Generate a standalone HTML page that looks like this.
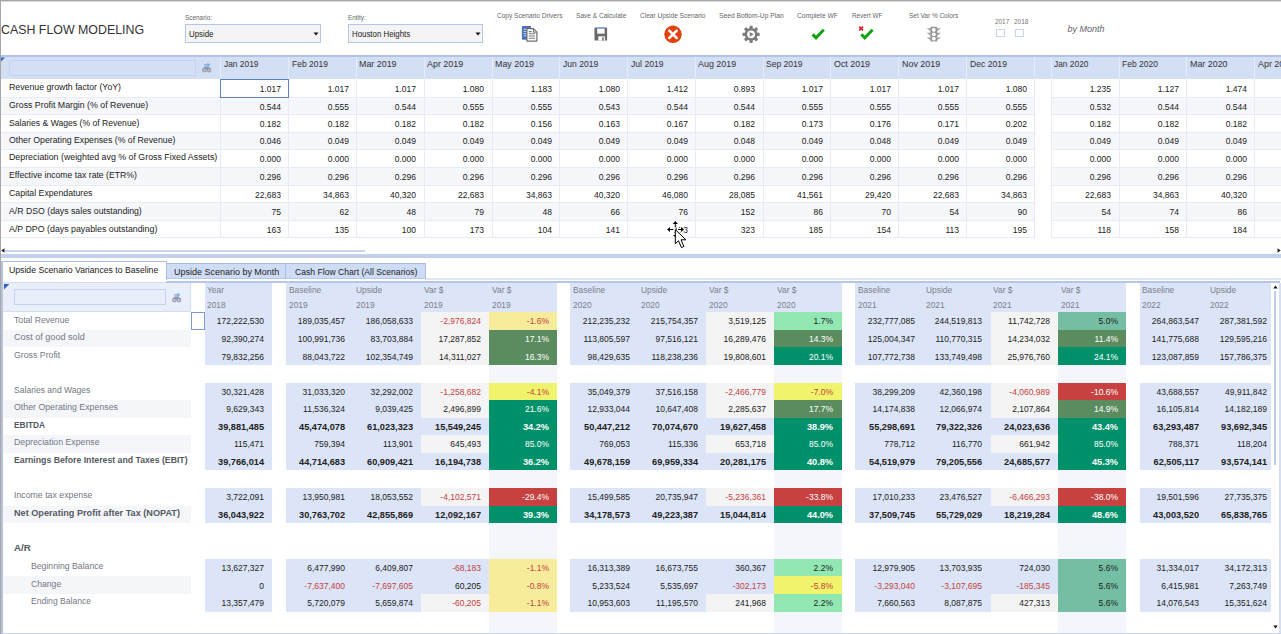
<!DOCTYPE html>
<html lang="en"><head><meta charset="utf-8"><title>Cash Flow Modeling</title>
<style>
html,body{margin:0;padding:0;}
body{width:1281px;height:634px;overflow:hidden;background:#fff;position:relative;font-family:"Liberation Sans",sans-serif;}
body>div,.a{position:absolute;}
.a{z-index:5;}
.t{white-space:nowrap;}
.tri{background:linear-gradient(135deg,#2d5fc4 50%,transparent 50%);}
</style></head><body>
<div style="left:0px;top:0px;width:1281px;height:1px;background:#a9a6a5;"></div>
<div style="left:0px;top:1px;width:1281px;height:1px;background:#d8d6d6;"></div>
<div style="left:0px;top:0px;width:1px;height:634px;background:#a9a6a5;"></div>
<div class="t" style="top:23.97px;font-size:12.5px;line-height:12px;color:#333;left:0.5px;transform:scaleX(0.990);transform-origin:0 50%;">CASH FLOW MODELING</div>
<div class="t" style="top:11.64px;font-size:7.4px;line-height:12px;color:#666;left:185px;transform:scaleX(0.865);transform-origin:0 50%;">Scenario:</div>
<div style="left:185px;top:24px;width:136px;height:19px;background:#f4f4f4;border:1px solid #b4c6ea;box-sizing:border-box;"></div>
<div class="t" style="top:28.32px;font-size:8.6px;line-height:12px;color:#222;left:188.8px;transform:scaleX(0.915);transform-origin:0 50%;">Upside</div>
<svg class="a" style="left:313px;top:32px" width="6" height="4" viewBox="0 0 6 4"><path d="M0.5 0.5h5L3 3.6z" fill="#111"/></svg>
<div class="t" style="top:11.64px;font-size:7.4px;line-height:12px;color:#666;left:348px;transform:scaleX(0.865);transform-origin:0 50%;">Entity:</div>
<div style="left:348px;top:24px;width:135px;height:19px;background:#f4f4f4;border:1px solid #b4c6ea;box-sizing:border-box;"></div>
<div class="t" style="top:28.32px;font-size:8.6px;line-height:12px;color:#222;left:351.8px;transform:scaleX(0.915);transform-origin:0 50%;">Houston Heights</div>
<svg class="a" style="left:475px;top:32px" width="6" height="4" viewBox="0 0 6 4"><path d="M0.5 0.5h5L3 3.6z" fill="#111"/></svg>
<div class="t" style="top:10.04px;font-size:7.4px;line-height:12px;color:#666;left:496.8px;transform:scaleX(0.885);transform-origin:0 50%;">Copy Scenario Drivers</div>
<div class="t" style="top:10.04px;font-size:7.4px;line-height:12px;color:#666;left:576px;transform:scaleX(0.888);transform-origin:0 50%;">Save &amp; Calculate</div>
<div class="t" style="top:10.04px;font-size:7.4px;line-height:12px;color:#666;left:639.5px;transform:scaleX(0.885);transform-origin:0 50%;">Clear Upside Scenario</div>
<div class="t" style="top:10.04px;font-size:7.4px;line-height:12px;color:#666;left:718.5px;transform:scaleX(0.904);transform-origin:0 50%;">Seed Bottom-Up Plan</div>
<div class="t" style="top:10.04px;font-size:7.4px;line-height:12px;color:#666;left:797px;transform:scaleX(0.906);transform-origin:0 50%;">Complete WF</div>
<div class="t" style="top:10.04px;font-size:7.4px;line-height:12px;color:#666;left:851.5px;transform:scaleX(0.860);transform-origin:0 50%;">Revert WF</div>
<div class="t" style="top:10.04px;font-size:7.4px;line-height:12px;color:#666;left:908.8px;transform:scaleX(0.875);transform-origin:0 50%;">Set Var % Colors</div>
<div class="t" style="top:16.01px;font-size:7.2px;line-height:12px;color:#777;left:995.3px;transform:scaleX(0.887);transform-origin:0 50%;">2017</div>
<div class="t" style="top:16.01px;font-size:7.2px;line-height:12px;color:#777;left:1014.2px;transform:scaleX(0.899);transform-origin:0 50%;">2018</div>
<div style="left:996px;top:29px;width:9px;height:8px;background:#fff;border:1px solid #c8d4f0;box-sizing:border-box;"></div>
<div style="left:1014.5px;top:29px;width:9.5px;height:8px;background:#fff;border:1px solid #c8d4f0;box-sizing:border-box;"></div>
<div class="t" style="top:22.68px;font-size:9px;line-height:12px;color:#666;left:1067.5px;font-style:italic;">by Month</div>
<svg class="a" style="left:521px;top:25px" width="18" height="18" viewBox="521 25 18 18">
<rect x="521.9" y="26.1" width="9.2" height="13.6" rx="1" fill="#4a70b8"/>
<path d="M523.5 29.2h4M523.5 31.4h4M523.5 33.6h4M523.5 35.8h4" stroke="#c9d7f0" stroke-width="1"/>
<path d="M526.9 28.7h6.6l3.4 3.4v9h-10z" fill="#fff" stroke="#6f6f6f" stroke-width="1.2" stroke-linejoin="round"/>
<path d="M533.4 28.8v3.4h3.4" fill="none" stroke="#6f6f6f" stroke-width="1"/>
<path d="M528.7 31.6h3M528.7 33.8h6.4M528.7 36h6.4M528.7 38.2h6.4" stroke="#7a7a7a" stroke-width="1.1"/>
</svg>
<svg class="a" style="left:593px;top:26px" width="16" height="16" viewBox="593 26 16 16">
<rect x="594.5" y="27.5" width="12.6" height="13" rx="0.6" fill="#6a6a6a"/>
<rect x="597.2" y="27.5" width="7.4" height="6.2" fill="#fff"/>
<rect x="597.2" y="27.4" width="7.4" height="1.2" fill="#4a7ccc"/>
<rect x="598.3" y="36.3" width="6.6" height="4.3" fill="#fff"/>
<rect x="602.2" y="37.2" width="1.5" height="3.4" fill="#6a6a6a"/>
</svg>
<svg class="a" style="left:663px;top:24px" width="20" height="20" viewBox="663 24 20 20">
<circle cx="673" cy="34.3" r="8.7" fill="#e2410c"/>
<path d="M669.3 30.6l7.4 7.4M676.7 30.6l-7.4 7.4" stroke="#fff" stroke-width="2.5" stroke-linecap="round"/>
</svg>
<svg class="a" style="left:741px;top:24px" width="20" height="20" viewBox="-10 -10 20 20">
<g transform="translate(0.1,0.3)" fill="#7c7c7c">
<g id="gt"><rect x="-1.6" y="-8.6" width="3.2" height="17.2" rx="0.7"/><rect x="-8.6" y="-1.6" width="17.2" height="3.2" rx="0.7"/></g>
<g transform="rotate(45)"><rect x="-1.6" y="-8.6" width="3.2" height="17.2" rx="0.7"/><rect x="-8.6" y="-1.6" width="17.2" height="3.2" rx="0.7"/></g>
<circle r="6.4"/>
<circle r="3.9" fill="#fff"/>
<path d="M-1.4 -2.4L2.6 0L-1.4 2.4z"/>
</g>
</svg>
<svg class="a" style="left:809px;top:26px" width="18" height="16" viewBox="809 26 18 16">
<path d="M812.6 34.4l3.4 3.4l7.8-8" fill="none" stroke="#12a214" stroke-width="3" />
</svg>
<svg class="a" style="left:857px;top:24px" width="20" height="18" viewBox="857 24 20 18">
<path d="M861.4 34.4l3.4 3.4l7.8-8" fill="none" stroke="#12a214" stroke-width="3" />
<path d="M859.2 26.6l3.8 3.8M863 26.6l-3.8 3.8" stroke="#e01b24" stroke-width="1.7"/>
</svg>
<svg class="a" style="left:925px;top:25px" width="18" height="18" viewBox="925 25 18 18">
<g fill="#a3a3a3">
<path d="M926.6 28.2h4.2v3.2zM926.6 32.8h4.2v3.2zM926.6 37.4h4.2v3.2z"/>
<path d="M941 28.2h-4.2v3.2zM941 32.8h-4.2v3.2zM941 37.4h-4.2v3.2z"/>
</g>
<rect x="930.4" y="26.8" width="6.8" height="14.8" rx="1" fill="#979797"/>
<circle cx="933.8" cy="29.9" r="1.9" fill="#fff"/><circle cx="933.8" cy="34.3" r="1.9" fill="#fff"/><circle cx="933.8" cy="38.7" r="1.9" fill="#fff"/>
</svg>
<svg class="a" style="left:200px;top:61px" width="14" height="14" viewBox="200 61 14 14">
<path d="M204 65.6v-1.4h3.4v-1.5l2.9 2.2l-2.9 2.2v-1.5z" fill="#6aaee8"/>
<circle cx="204.4" cy="70" r="2.4" fill="#969eac"/><circle cx="208.9" cy="70" r="2.4" fill="#969eac"/>
<path d="M204.6 66.6h4l1.6 2.6h-7.2z" fill="#8f97a6"/>
<circle cx="204.4" cy="70.2" r="1.1" fill="#b9c2d4"/><circle cx="208.9" cy="70.2" r="1.1" fill="#b9c2d4"/>
</svg>
<svg class="a" style="left:170px;top:291px" width="14" height="14" viewBox="200 61 14 14">
<path d="M204 65.6v-1.4h3.4v-1.5l2.9 2.2l-2.9 2.2v-1.5z" fill="#6aaee8"/>
<circle cx="204.4" cy="70" r="2.4" fill="#969eac"/><circle cx="208.9" cy="70" r="2.4" fill="#969eac"/>
<path d="M204.6 66.6h4l1.6 2.6h-7.2z" fill="#8f97a6"/>
<circle cx="204.4" cy="70.2" r="1.1" fill="#c9d2e4"/><circle cx="208.9" cy="70.2" r="1.1" fill="#c9d2e4"/>
</svg>

<div style="left:1px;top:55px;width:1280px;height:24px;background:#d3dff5;"></div>
<div style="left:1px;top:55px;width:1280px;height:2px;background:#b1c3e8;"></div>
<div style="left:1px;top:96.9px;width:1280px;height:17.3px;background:#f6f7fb;"></div>
<div style="left:1px;top:131.6px;width:1280px;height:17.4px;background:#f6f7fb;"></div>
<div style="left:1px;top:167px;width:1280px;height:17.8px;background:#f6f7fb;"></div>
<div style="left:1px;top:202.5px;width:1280px;height:17.7px;background:#f6f7fb;"></div>
<div style="left:1px;top:97px;width:1280px;height:1px;background:#e7ebf6;"></div>
<div style="left:1px;top:114px;width:1280px;height:1px;background:#e7ebf6;"></div>
<div style="left:1px;top:132px;width:1280px;height:1px;background:#e7ebf6;"></div>
<div style="left:1px;top:149px;width:1280px;height:1px;background:#e7ebf6;"></div>
<div style="left:1px;top:167px;width:1280px;height:1px;background:#e7ebf6;"></div>
<div style="left:1px;top:185px;width:1280px;height:1px;background:#e7ebf6;"></div>
<div style="left:1px;top:202px;width:1280px;height:1px;background:#e7ebf6;"></div>
<div style="left:1px;top:220px;width:1280px;height:1px;background:#e7ebf6;"></div>
<div style="left:1px;top:237px;width:1280px;height:1px;background:#e7ebf6;"></div>
<div style="left:220px;top:57px;width:1px;height:22px;background:#e6ecf9;"></div>
<div style="left:220px;top:79px;width:1px;height:158px;background:#e7ebf6;"></div>
<div style="left:288px;top:57px;width:1px;height:22px;background:#e6ecf9;"></div>
<div style="left:288px;top:79px;width:1px;height:158px;background:#e7ebf6;"></div>
<div style="left:356px;top:57px;width:1px;height:22px;background:#e6ecf9;"></div>
<div style="left:356px;top:79px;width:1px;height:158px;background:#e7ebf6;"></div>
<div style="left:424px;top:57px;width:1px;height:22px;background:#e6ecf9;"></div>
<div style="left:424px;top:79px;width:1px;height:158px;background:#e7ebf6;"></div>
<div style="left:492px;top:57px;width:1px;height:22px;background:#e6ecf9;"></div>
<div style="left:492px;top:79px;width:1px;height:158px;background:#e7ebf6;"></div>
<div style="left:559px;top:57px;width:1px;height:22px;background:#e6ecf9;"></div>
<div style="left:559px;top:79px;width:1px;height:158px;background:#e7ebf6;"></div>
<div style="left:627px;top:57px;width:1px;height:22px;background:#e6ecf9;"></div>
<div style="left:627px;top:79px;width:1px;height:158px;background:#e7ebf6;"></div>
<div style="left:695px;top:57px;width:1px;height:22px;background:#e6ecf9;"></div>
<div style="left:695px;top:79px;width:1px;height:158px;background:#e7ebf6;"></div>
<div style="left:763px;top:57px;width:1px;height:22px;background:#e6ecf9;"></div>
<div style="left:763px;top:79px;width:1px;height:158px;background:#e7ebf6;"></div>
<div style="left:830px;top:57px;width:1px;height:22px;background:#e6ecf9;"></div>
<div style="left:830px;top:79px;width:1px;height:158px;background:#e7ebf6;"></div>
<div style="left:898px;top:57px;width:1px;height:22px;background:#e6ecf9;"></div>
<div style="left:898px;top:79px;width:1px;height:158px;background:#e7ebf6;"></div>
<div style="left:966px;top:57px;width:1px;height:22px;background:#e6ecf9;"></div>
<div style="left:966px;top:79px;width:1px;height:158px;background:#e7ebf6;"></div>
<div style="left:1034px;top:57px;width:1px;height:22px;background:#e6ecf9;"></div>
<div style="left:1034px;top:79px;width:1px;height:158px;background:#e7ebf6;"></div>
<div style="left:1051px;top:57px;width:1px;height:22px;background:#e6ecf9;"></div>
<div style="left:1051px;top:79px;width:1px;height:158px;background:#e7ebf6;"></div>
<div style="left:1119px;top:57px;width:1px;height:22px;background:#e6ecf9;"></div>
<div style="left:1119px;top:79px;width:1px;height:158px;background:#e7ebf6;"></div>
<div style="left:1186px;top:57px;width:1px;height:22px;background:#e6ecf9;"></div>
<div style="left:1186px;top:79px;width:1px;height:158px;background:#e7ebf6;"></div>
<div style="left:1254px;top:57px;width:1px;height:22px;background:#e6ecf9;"></div>
<div style="left:1254px;top:79px;width:1px;height:158px;background:#e7ebf6;"></div>
<div style="left:1035px;top:79px;width:16px;height:159px;background:#fff;"></div>
<div style="left:9px;top:60px;width:187px;height:16px;border:1px solid #c6d3ee;box-sizing:border-box;"></div>
<svg class="a" style="left:1px;top:57px" width="5" height="5" viewBox="0 0 5 5"><path d="M0 0.4h4L0 4.4z" fill="#2d5fc4"/></svg>
<div class="t" style="top:58.44px;font-size:9.7px;line-height:12px;color:#333;left:223.7px;transform:scaleX(0.864);transform-origin:0 50%;">Jan 2019</div>
<div class="t" style="top:58.44px;font-size:9.7px;line-height:12px;color:#333;left:291.5px;transform:scaleX(0.878);transform-origin:0 50%;">Feb 2019</div>
<div class="t" style="top:58.44px;font-size:9.7px;line-height:12px;color:#333;left:359.3px;transform:scaleX(0.918);transform-origin:0 50%;">Mar 2019</div>
<div class="t" style="top:58.44px;font-size:9.7px;line-height:12px;color:#333;left:427.1px;transform:scaleX(0.919);transform-origin:0 50%;">Apr 2019</div>
<div class="t" style="top:58.44px;font-size:9.7px;line-height:12px;color:#333;left:494.9px;transform:scaleX(0.918);transform-origin:0 50%;">May 2019</div>
<div class="t" style="top:58.44px;font-size:9.7px;line-height:12px;color:#333;left:562.7px;transform:scaleX(0.884);transform-origin:0 50%;">Jun 2019</div>
<div class="t" style="top:58.44px;font-size:9.7px;line-height:12px;color:#333;left:630.5px;transform:scaleX(0.889);transform-origin:0 50%;">Jul 2019</div>
<div class="t" style="top:58.44px;font-size:9.7px;line-height:12px;color:#333;left:698.3px;transform:scaleX(0.920);transform-origin:0 50%;">Aug 2019</div>
<div class="t" style="top:58.44px;font-size:9.7px;line-height:12px;color:#333;left:766.1px;transform:scaleX(0.881);transform-origin:0 50%;">Sep 2019</div>
<div class="t" style="top:58.44px;font-size:9.7px;line-height:12px;color:#333;left:833.9px;transform:scaleX(0.917);transform-origin:0 50%;">Oct 2019</div>
<div class="t" style="top:58.44px;font-size:9.7px;line-height:12px;color:#333;left:901.7px;transform:scaleX(0.920);transform-origin:0 50%;">Nov 2019</div>
<div class="t" style="top:58.44px;font-size:9.7px;line-height:12px;color:#333;left:969.5px;transform:scaleX(0.891);transform-origin:0 50%;">Dec 2019</div>
<div class="t" style="top:58.44px;font-size:9.7px;line-height:12px;color:#333;left:1054.2px;transform:scaleX(0.864);transform-origin:0 50%;">Jan 2020</div>
<div class="t" style="top:58.44px;font-size:9.7px;line-height:12px;color:#333;left:1122px;transform:scaleX(0.878);transform-origin:0 50%;">Feb 2020</div>
<div class="t" style="top:58.44px;font-size:9.7px;line-height:12px;color:#333;left:1189.8px;transform:scaleX(0.918);transform-origin:0 50%;">Mar 2020</div>
<div class="t" style="top:58.44px;font-size:9.7px;line-height:12px;color:#333;left:1257.6px;transform:scaleX(0.919);transform-origin:0 50%;">Apr 2020</div>
<div class="t" style="top:81.24px;font-size:9.7px;line-height:12px;color:#222;left:8.9px;transform:scaleX(0.903);transform-origin:0 50%;">Revenue growth factor (YoY)</div>
<div class="t" style="top:82.54px;font-size:9.7px;line-height:12px;color:#222;left:220.7px;width:60px;text-align:right;transform:scaleX(0.877);transform-origin:100% 50%;">1.017</div>
<div class="t" style="top:82.54px;font-size:9.7px;line-height:12px;color:#222;left:288.5px;width:60px;text-align:right;transform:scaleX(0.877);transform-origin:100% 50%;">1.017</div>
<div class="t" style="top:82.54px;font-size:9.7px;line-height:12px;color:#222;left:356.3px;width:60px;text-align:right;transform:scaleX(0.877);transform-origin:100% 50%;">1.017</div>
<div class="t" style="top:82.54px;font-size:9.7px;line-height:12px;color:#222;left:424.1px;width:60px;text-align:right;transform:scaleX(0.877);transform-origin:100% 50%;">1.080</div>
<div class="t" style="top:82.54px;font-size:9.7px;line-height:12px;color:#222;left:491.9px;width:60px;text-align:right;transform:scaleX(0.877);transform-origin:100% 50%;">1.183</div>
<div class="t" style="top:82.54px;font-size:9.7px;line-height:12px;color:#222;left:559.7px;width:60px;text-align:right;transform:scaleX(0.877);transform-origin:100% 50%;">1.080</div>
<div class="t" style="top:82.54px;font-size:9.7px;line-height:12px;color:#222;left:627.5px;width:60px;text-align:right;transform:scaleX(0.877);transform-origin:100% 50%;">1.412</div>
<div class="t" style="top:82.54px;font-size:9.7px;line-height:12px;color:#222;left:695.3px;width:60px;text-align:right;transform:scaleX(0.877);transform-origin:100% 50%;">0.893</div>
<div class="t" style="top:82.54px;font-size:9.7px;line-height:12px;color:#222;left:763.1px;width:60px;text-align:right;transform:scaleX(0.877);transform-origin:100% 50%;">1.017</div>
<div class="t" style="top:82.54px;font-size:9.7px;line-height:12px;color:#222;left:830.9px;width:60px;text-align:right;transform:scaleX(0.877);transform-origin:100% 50%;">1.017</div>
<div class="t" style="top:82.54px;font-size:9.7px;line-height:12px;color:#222;left:898.7px;width:60px;text-align:right;transform:scaleX(0.877);transform-origin:100% 50%;">1.017</div>
<div class="t" style="top:82.54px;font-size:9.7px;line-height:12px;color:#222;left:966.5px;width:60px;text-align:right;transform:scaleX(0.877);transform-origin:100% 50%;">1.080</div>
<div class="t" style="top:82.54px;font-size:9.7px;line-height:12px;color:#222;left:1051.2px;width:60px;text-align:right;transform:scaleX(0.877);transform-origin:100% 50%;">1.235</div>
<div class="t" style="top:82.54px;font-size:9.7px;line-height:12px;color:#222;left:1119px;width:60px;text-align:right;transform:scaleX(0.877);transform-origin:100% 50%;">1.127</div>
<div class="t" style="top:82.54px;font-size:9.7px;line-height:12px;color:#222;left:1186.8px;width:60px;text-align:right;transform:scaleX(0.877);transform-origin:100% 50%;">1.474</div>
<div class="t" style="top:99.34px;font-size:9.7px;line-height:12px;color:#222;left:8.9px;transform:scaleX(0.907);transform-origin:0 50%;">Gross Profit Margin (% of Revenue)</div>
<div class="t" style="top:100.64px;font-size:9.7px;line-height:12px;color:#222;left:220.7px;width:60px;text-align:right;transform:scaleX(0.877);transform-origin:100% 50%;">0.544</div>
<div class="t" style="top:100.64px;font-size:9.7px;line-height:12px;color:#222;left:288.5px;width:60px;text-align:right;transform:scaleX(0.877);transform-origin:100% 50%;">0.555</div>
<div class="t" style="top:100.64px;font-size:9.7px;line-height:12px;color:#222;left:356.3px;width:60px;text-align:right;transform:scaleX(0.877);transform-origin:100% 50%;">0.544</div>
<div class="t" style="top:100.64px;font-size:9.7px;line-height:12px;color:#222;left:424.1px;width:60px;text-align:right;transform:scaleX(0.877);transform-origin:100% 50%;">0.555</div>
<div class="t" style="top:100.64px;font-size:9.7px;line-height:12px;color:#222;left:491.9px;width:60px;text-align:right;transform:scaleX(0.877);transform-origin:100% 50%;">0.555</div>
<div class="t" style="top:100.64px;font-size:9.7px;line-height:12px;color:#222;left:559.7px;width:60px;text-align:right;transform:scaleX(0.877);transform-origin:100% 50%;">0.543</div>
<div class="t" style="top:100.64px;font-size:9.7px;line-height:12px;color:#222;left:627.5px;width:60px;text-align:right;transform:scaleX(0.877);transform-origin:100% 50%;">0.544</div>
<div class="t" style="top:100.64px;font-size:9.7px;line-height:12px;color:#222;left:695.3px;width:60px;text-align:right;transform:scaleX(0.877);transform-origin:100% 50%;">0.544</div>
<div class="t" style="top:100.64px;font-size:9.7px;line-height:12px;color:#222;left:763.1px;width:60px;text-align:right;transform:scaleX(0.877);transform-origin:100% 50%;">0.555</div>
<div class="t" style="top:100.64px;font-size:9.7px;line-height:12px;color:#222;left:830.9px;width:60px;text-align:right;transform:scaleX(0.877);transform-origin:100% 50%;">0.555</div>
<div class="t" style="top:100.64px;font-size:9.7px;line-height:12px;color:#222;left:898.7px;width:60px;text-align:right;transform:scaleX(0.877);transform-origin:100% 50%;">0.555</div>
<div class="t" style="top:100.64px;font-size:9.7px;line-height:12px;color:#222;left:966.5px;width:60px;text-align:right;transform:scaleX(0.877);transform-origin:100% 50%;">0.555</div>
<div class="t" style="top:100.64px;font-size:9.7px;line-height:12px;color:#222;left:1051.2px;width:60px;text-align:right;transform:scaleX(0.877);transform-origin:100% 50%;">0.532</div>
<div class="t" style="top:100.64px;font-size:9.7px;line-height:12px;color:#222;left:1119px;width:60px;text-align:right;transform:scaleX(0.877);transform-origin:100% 50%;">0.544</div>
<div class="t" style="top:100.64px;font-size:9.7px;line-height:12px;color:#222;left:1186.8px;width:60px;text-align:right;transform:scaleX(0.877);transform-origin:100% 50%;">0.544</div>
<div class="t" style="top:116.64px;font-size:9.7px;line-height:12px;color:#222;left:8.9px;transform:scaleX(0.889);transform-origin:0 50%;">Salaries &amp; Wages (% of Revenue)</div>
<div class="t" style="top:117.94px;font-size:9.7px;line-height:12px;color:#222;left:220.7px;width:60px;text-align:right;transform:scaleX(0.877);transform-origin:100% 50%;">0.182</div>
<div class="t" style="top:117.94px;font-size:9.7px;line-height:12px;color:#222;left:288.5px;width:60px;text-align:right;transform:scaleX(0.877);transform-origin:100% 50%;">0.182</div>
<div class="t" style="top:117.94px;font-size:9.7px;line-height:12px;color:#222;left:356.3px;width:60px;text-align:right;transform:scaleX(0.877);transform-origin:100% 50%;">0.182</div>
<div class="t" style="top:117.94px;font-size:9.7px;line-height:12px;color:#222;left:424.1px;width:60px;text-align:right;transform:scaleX(0.877);transform-origin:100% 50%;">0.182</div>
<div class="t" style="top:117.94px;font-size:9.7px;line-height:12px;color:#222;left:491.9px;width:60px;text-align:right;transform:scaleX(0.877);transform-origin:100% 50%;">0.156</div>
<div class="t" style="top:117.94px;font-size:9.7px;line-height:12px;color:#222;left:559.7px;width:60px;text-align:right;transform:scaleX(0.877);transform-origin:100% 50%;">0.163</div>
<div class="t" style="top:117.94px;font-size:9.7px;line-height:12px;color:#222;left:627.5px;width:60px;text-align:right;transform:scaleX(0.877);transform-origin:100% 50%;">0.167</div>
<div class="t" style="top:117.94px;font-size:9.7px;line-height:12px;color:#222;left:695.3px;width:60px;text-align:right;transform:scaleX(0.877);transform-origin:100% 50%;">0.182</div>
<div class="t" style="top:117.94px;font-size:9.7px;line-height:12px;color:#222;left:763.1px;width:60px;text-align:right;transform:scaleX(0.877);transform-origin:100% 50%;">0.173</div>
<div class="t" style="top:117.94px;font-size:9.7px;line-height:12px;color:#222;left:830.9px;width:60px;text-align:right;transform:scaleX(0.877);transform-origin:100% 50%;">0.176</div>
<div class="t" style="top:117.94px;font-size:9.7px;line-height:12px;color:#222;left:898.7px;width:60px;text-align:right;transform:scaleX(0.877);transform-origin:100% 50%;">0.171</div>
<div class="t" style="top:117.94px;font-size:9.7px;line-height:12px;color:#222;left:966.5px;width:60px;text-align:right;transform:scaleX(0.877);transform-origin:100% 50%;">0.202</div>
<div class="t" style="top:117.94px;font-size:9.7px;line-height:12px;color:#222;left:1051.2px;width:60px;text-align:right;transform:scaleX(0.877);transform-origin:100% 50%;">0.182</div>
<div class="t" style="top:117.94px;font-size:9.7px;line-height:12px;color:#222;left:1119px;width:60px;text-align:right;transform:scaleX(0.877);transform-origin:100% 50%;">0.182</div>
<div class="t" style="top:117.94px;font-size:9.7px;line-height:12px;color:#222;left:1186.8px;width:60px;text-align:right;transform:scaleX(0.877);transform-origin:100% 50%;">0.182</div>
<div class="t" style="top:134.04px;font-size:9.7px;line-height:12px;color:#222;left:8.9px;transform:scaleX(0.901);transform-origin:0 50%;">Other Operating Expenses (% of Revenue)</div>
<div class="t" style="top:135.34px;font-size:9.7px;line-height:12px;color:#222;left:220.7px;width:60px;text-align:right;transform:scaleX(0.877);transform-origin:100% 50%;">0.046</div>
<div class="t" style="top:135.34px;font-size:9.7px;line-height:12px;color:#222;left:288.5px;width:60px;text-align:right;transform:scaleX(0.877);transform-origin:100% 50%;">0.049</div>
<div class="t" style="top:135.34px;font-size:9.7px;line-height:12px;color:#222;left:356.3px;width:60px;text-align:right;transform:scaleX(0.877);transform-origin:100% 50%;">0.049</div>
<div class="t" style="top:135.34px;font-size:9.7px;line-height:12px;color:#222;left:424.1px;width:60px;text-align:right;transform:scaleX(0.877);transform-origin:100% 50%;">0.049</div>
<div class="t" style="top:135.34px;font-size:9.7px;line-height:12px;color:#222;left:491.9px;width:60px;text-align:right;transform:scaleX(0.877);transform-origin:100% 50%;">0.049</div>
<div class="t" style="top:135.34px;font-size:9.7px;line-height:12px;color:#222;left:559.7px;width:60px;text-align:right;transform:scaleX(0.877);transform-origin:100% 50%;">0.049</div>
<div class="t" style="top:135.34px;font-size:9.7px;line-height:12px;color:#222;left:627.5px;width:60px;text-align:right;transform:scaleX(0.877);transform-origin:100% 50%;">0.049</div>
<div class="t" style="top:135.34px;font-size:9.7px;line-height:12px;color:#222;left:695.3px;width:60px;text-align:right;transform:scaleX(0.877);transform-origin:100% 50%;">0.048</div>
<div class="t" style="top:135.34px;font-size:9.7px;line-height:12px;color:#222;left:763.1px;width:60px;text-align:right;transform:scaleX(0.877);transform-origin:100% 50%;">0.049</div>
<div class="t" style="top:135.34px;font-size:9.7px;line-height:12px;color:#222;left:830.9px;width:60px;text-align:right;transform:scaleX(0.877);transform-origin:100% 50%;">0.048</div>
<div class="t" style="top:135.34px;font-size:9.7px;line-height:12px;color:#222;left:898.7px;width:60px;text-align:right;transform:scaleX(0.877);transform-origin:100% 50%;">0.049</div>
<div class="t" style="top:135.34px;font-size:9.7px;line-height:12px;color:#222;left:966.5px;width:60px;text-align:right;transform:scaleX(0.877);transform-origin:100% 50%;">0.049</div>
<div class="t" style="top:135.34px;font-size:9.7px;line-height:12px;color:#222;left:1051.2px;width:60px;text-align:right;transform:scaleX(0.877);transform-origin:100% 50%;">0.049</div>
<div class="t" style="top:135.34px;font-size:9.7px;line-height:12px;color:#222;left:1119px;width:60px;text-align:right;transform:scaleX(0.877);transform-origin:100% 50%;">0.049</div>
<div class="t" style="top:135.34px;font-size:9.7px;line-height:12px;color:#222;left:1186.8px;width:60px;text-align:right;transform:scaleX(0.877);transform-origin:100% 50%;">0.049</div>
<div class="t" style="top:151.44px;font-size:9.7px;line-height:12px;color:#222;left:8.9px;transform:scaleX(0.910);transform-origin:0 50%;">Depreciation (weighted avg % of Gross Fixed Assets)</div>
<div class="t" style="top:152.74px;font-size:9.7px;line-height:12px;color:#222;left:220.7px;width:60px;text-align:right;transform:scaleX(0.877);transform-origin:100% 50%;">0.000</div>
<div class="t" style="top:152.74px;font-size:9.7px;line-height:12px;color:#222;left:288.5px;width:60px;text-align:right;transform:scaleX(0.877);transform-origin:100% 50%;">0.000</div>
<div class="t" style="top:152.74px;font-size:9.7px;line-height:12px;color:#222;left:356.3px;width:60px;text-align:right;transform:scaleX(0.877);transform-origin:100% 50%;">0.000</div>
<div class="t" style="top:152.74px;font-size:9.7px;line-height:12px;color:#222;left:424.1px;width:60px;text-align:right;transform:scaleX(0.877);transform-origin:100% 50%;">0.000</div>
<div class="t" style="top:152.74px;font-size:9.7px;line-height:12px;color:#222;left:491.9px;width:60px;text-align:right;transform:scaleX(0.877);transform-origin:100% 50%;">0.000</div>
<div class="t" style="top:152.74px;font-size:9.7px;line-height:12px;color:#222;left:559.7px;width:60px;text-align:right;transform:scaleX(0.877);transform-origin:100% 50%;">0.000</div>
<div class="t" style="top:152.74px;font-size:9.7px;line-height:12px;color:#222;left:627.5px;width:60px;text-align:right;transform:scaleX(0.877);transform-origin:100% 50%;">0.000</div>
<div class="t" style="top:152.74px;font-size:9.7px;line-height:12px;color:#222;left:695.3px;width:60px;text-align:right;transform:scaleX(0.877);transform-origin:100% 50%;">0.000</div>
<div class="t" style="top:152.74px;font-size:9.7px;line-height:12px;color:#222;left:763.1px;width:60px;text-align:right;transform:scaleX(0.877);transform-origin:100% 50%;">0.000</div>
<div class="t" style="top:152.74px;font-size:9.7px;line-height:12px;color:#222;left:830.9px;width:60px;text-align:right;transform:scaleX(0.877);transform-origin:100% 50%;">0.000</div>
<div class="t" style="top:152.74px;font-size:9.7px;line-height:12px;color:#222;left:898.7px;width:60px;text-align:right;transform:scaleX(0.877);transform-origin:100% 50%;">0.000</div>
<div class="t" style="top:152.74px;font-size:9.7px;line-height:12px;color:#222;left:966.5px;width:60px;text-align:right;transform:scaleX(0.877);transform-origin:100% 50%;">0.000</div>
<div class="t" style="top:152.74px;font-size:9.7px;line-height:12px;color:#222;left:1051.2px;width:60px;text-align:right;transform:scaleX(0.877);transform-origin:100% 50%;">0.000</div>
<div class="t" style="top:152.74px;font-size:9.7px;line-height:12px;color:#222;left:1119px;width:60px;text-align:right;transform:scaleX(0.877);transform-origin:100% 50%;">0.000</div>
<div class="t" style="top:152.74px;font-size:9.7px;line-height:12px;color:#222;left:1186.8px;width:60px;text-align:right;transform:scaleX(0.877);transform-origin:100% 50%;">0.000</div>
<div class="t" style="top:169.44px;font-size:9.7px;line-height:12px;color:#222;left:8.9px;transform:scaleX(0.894);transform-origin:0 50%;">Effective income tax rate (ETR%)</div>
<div class="t" style="top:170.74px;font-size:9.7px;line-height:12px;color:#222;left:220.7px;width:60px;text-align:right;transform:scaleX(0.877);transform-origin:100% 50%;">0.296</div>
<div class="t" style="top:170.74px;font-size:9.7px;line-height:12px;color:#222;left:288.5px;width:60px;text-align:right;transform:scaleX(0.877);transform-origin:100% 50%;">0.296</div>
<div class="t" style="top:170.74px;font-size:9.7px;line-height:12px;color:#222;left:356.3px;width:60px;text-align:right;transform:scaleX(0.877);transform-origin:100% 50%;">0.296</div>
<div class="t" style="top:170.74px;font-size:9.7px;line-height:12px;color:#222;left:424.1px;width:60px;text-align:right;transform:scaleX(0.877);transform-origin:100% 50%;">0.296</div>
<div class="t" style="top:170.74px;font-size:9.7px;line-height:12px;color:#222;left:491.9px;width:60px;text-align:right;transform:scaleX(0.877);transform-origin:100% 50%;">0.296</div>
<div class="t" style="top:170.74px;font-size:9.7px;line-height:12px;color:#222;left:559.7px;width:60px;text-align:right;transform:scaleX(0.877);transform-origin:100% 50%;">0.296</div>
<div class="t" style="top:170.74px;font-size:9.7px;line-height:12px;color:#222;left:627.5px;width:60px;text-align:right;transform:scaleX(0.877);transform-origin:100% 50%;">0.296</div>
<div class="t" style="top:170.74px;font-size:9.7px;line-height:12px;color:#222;left:695.3px;width:60px;text-align:right;transform:scaleX(0.877);transform-origin:100% 50%;">0.296</div>
<div class="t" style="top:170.74px;font-size:9.7px;line-height:12px;color:#222;left:763.1px;width:60px;text-align:right;transform:scaleX(0.877);transform-origin:100% 50%;">0.296</div>
<div class="t" style="top:170.74px;font-size:9.7px;line-height:12px;color:#222;left:830.9px;width:60px;text-align:right;transform:scaleX(0.877);transform-origin:100% 50%;">0.296</div>
<div class="t" style="top:170.74px;font-size:9.7px;line-height:12px;color:#222;left:898.7px;width:60px;text-align:right;transform:scaleX(0.877);transform-origin:100% 50%;">0.296</div>
<div class="t" style="top:170.74px;font-size:9.7px;line-height:12px;color:#222;left:966.5px;width:60px;text-align:right;transform:scaleX(0.877);transform-origin:100% 50%;">0.296</div>
<div class="t" style="top:170.74px;font-size:9.7px;line-height:12px;color:#222;left:1051.2px;width:60px;text-align:right;transform:scaleX(0.877);transform-origin:100% 50%;">0.296</div>
<div class="t" style="top:170.74px;font-size:9.7px;line-height:12px;color:#222;left:1119px;width:60px;text-align:right;transform:scaleX(0.877);transform-origin:100% 50%;">0.296</div>
<div class="t" style="top:170.74px;font-size:9.7px;line-height:12px;color:#222;left:1186.8px;width:60px;text-align:right;transform:scaleX(0.877);transform-origin:100% 50%;">0.296</div>
<div class="t" style="top:187.24px;font-size:9.7px;line-height:12px;color:#222;left:8.9px;transform:scaleX(0.900);transform-origin:0 50%;">Capital Expendatures</div>
<div class="t" style="top:188.54px;font-size:9.7px;line-height:12px;color:#222;left:220.7px;width:60px;text-align:right;transform:scaleX(0.877);transform-origin:100% 50%;">22,683</div>
<div class="t" style="top:188.54px;font-size:9.7px;line-height:12px;color:#222;left:288.5px;width:60px;text-align:right;transform:scaleX(0.877);transform-origin:100% 50%;">34,863</div>
<div class="t" style="top:188.54px;font-size:9.7px;line-height:12px;color:#222;left:356.3px;width:60px;text-align:right;transform:scaleX(0.877);transform-origin:100% 50%;">40,320</div>
<div class="t" style="top:188.54px;font-size:9.7px;line-height:12px;color:#222;left:424.1px;width:60px;text-align:right;transform:scaleX(0.877);transform-origin:100% 50%;">22,683</div>
<div class="t" style="top:188.54px;font-size:9.7px;line-height:12px;color:#222;left:491.9px;width:60px;text-align:right;transform:scaleX(0.877);transform-origin:100% 50%;">34,863</div>
<div class="t" style="top:188.54px;font-size:9.7px;line-height:12px;color:#222;left:559.7px;width:60px;text-align:right;transform:scaleX(0.877);transform-origin:100% 50%;">40,320</div>
<div class="t" style="top:188.54px;font-size:9.7px;line-height:12px;color:#222;left:627.5px;width:60px;text-align:right;transform:scaleX(0.877);transform-origin:100% 50%;">46,080</div>
<div class="t" style="top:188.54px;font-size:9.7px;line-height:12px;color:#222;left:695.3px;width:60px;text-align:right;transform:scaleX(0.877);transform-origin:100% 50%;">28,085</div>
<div class="t" style="top:188.54px;font-size:9.7px;line-height:12px;color:#222;left:763.1px;width:60px;text-align:right;transform:scaleX(0.877);transform-origin:100% 50%;">41,561</div>
<div class="t" style="top:188.54px;font-size:9.7px;line-height:12px;color:#222;left:830.9px;width:60px;text-align:right;transform:scaleX(0.877);transform-origin:100% 50%;">29,420</div>
<div class="t" style="top:188.54px;font-size:9.7px;line-height:12px;color:#222;left:898.7px;width:60px;text-align:right;transform:scaleX(0.877);transform-origin:100% 50%;">22,683</div>
<div class="t" style="top:188.54px;font-size:9.7px;line-height:12px;color:#222;left:966.5px;width:60px;text-align:right;transform:scaleX(0.877);transform-origin:100% 50%;">34,863</div>
<div class="t" style="top:188.54px;font-size:9.7px;line-height:12px;color:#222;left:1051.2px;width:60px;text-align:right;transform:scaleX(0.877);transform-origin:100% 50%;">22,683</div>
<div class="t" style="top:188.54px;font-size:9.7px;line-height:12px;color:#222;left:1119px;width:60px;text-align:right;transform:scaleX(0.877);transform-origin:100% 50%;">34,863</div>
<div class="t" style="top:188.54px;font-size:9.7px;line-height:12px;color:#222;left:1186.8px;width:60px;text-align:right;transform:scaleX(0.877);transform-origin:100% 50%;">40,320</div>
<div class="t" style="top:204.94px;font-size:9.7px;line-height:12px;color:#222;left:8.9px;transform:scaleX(0.900);transform-origin:0 50%;">A/R DSO (days sales outstanding)</div>
<div class="t" style="top:206.24px;font-size:9.7px;line-height:12px;color:#222;left:220.7px;width:60px;text-align:right;transform:scaleX(0.877);transform-origin:100% 50%;">75</div>
<div class="t" style="top:206.24px;font-size:9.7px;line-height:12px;color:#222;left:288.5px;width:60px;text-align:right;transform:scaleX(0.877);transform-origin:100% 50%;">62</div>
<div class="t" style="top:206.24px;font-size:9.7px;line-height:12px;color:#222;left:356.3px;width:60px;text-align:right;transform:scaleX(0.877);transform-origin:100% 50%;">48</div>
<div class="t" style="top:206.24px;font-size:9.7px;line-height:12px;color:#222;left:424.1px;width:60px;text-align:right;transform:scaleX(0.877);transform-origin:100% 50%;">79</div>
<div class="t" style="top:206.24px;font-size:9.7px;line-height:12px;color:#222;left:491.9px;width:60px;text-align:right;transform:scaleX(0.877);transform-origin:100% 50%;">48</div>
<div class="t" style="top:206.24px;font-size:9.7px;line-height:12px;color:#222;left:559.7px;width:60px;text-align:right;transform:scaleX(0.877);transform-origin:100% 50%;">66</div>
<div class="t" style="top:206.24px;font-size:9.7px;line-height:12px;color:#222;left:627.5px;width:60px;text-align:right;transform:scaleX(0.877);transform-origin:100% 50%;">76</div>
<div class="t" style="top:206.24px;font-size:9.7px;line-height:12px;color:#222;left:695.3px;width:60px;text-align:right;transform:scaleX(0.877);transform-origin:100% 50%;">152</div>
<div class="t" style="top:206.24px;font-size:9.7px;line-height:12px;color:#222;left:763.1px;width:60px;text-align:right;transform:scaleX(0.877);transform-origin:100% 50%;">86</div>
<div class="t" style="top:206.24px;font-size:9.7px;line-height:12px;color:#222;left:830.9px;width:60px;text-align:right;transform:scaleX(0.877);transform-origin:100% 50%;">70</div>
<div class="t" style="top:206.24px;font-size:9.7px;line-height:12px;color:#222;left:898.7px;width:60px;text-align:right;transform:scaleX(0.877);transform-origin:100% 50%;">54</div>
<div class="t" style="top:206.24px;font-size:9.7px;line-height:12px;color:#222;left:966.5px;width:60px;text-align:right;transform:scaleX(0.877);transform-origin:100% 50%;">90</div>
<div class="t" style="top:206.24px;font-size:9.7px;line-height:12px;color:#222;left:1051.2px;width:60px;text-align:right;transform:scaleX(0.877);transform-origin:100% 50%;">54</div>
<div class="t" style="top:206.24px;font-size:9.7px;line-height:12px;color:#222;left:1119px;width:60px;text-align:right;transform:scaleX(0.877);transform-origin:100% 50%;">74</div>
<div class="t" style="top:206.24px;font-size:9.7px;line-height:12px;color:#222;left:1186.8px;width:60px;text-align:right;transform:scaleX(0.877);transform-origin:100% 50%;">86</div>
<div class="t" style="top:222.64px;font-size:9.7px;line-height:12px;color:#222;left:8.9px;transform:scaleX(0.910);transform-origin:0 50%;">A/P DPO (days payables outstanding)</div>
<div class="t" style="top:223.94px;font-size:9.7px;line-height:12px;color:#222;left:220.7px;width:60px;text-align:right;transform:scaleX(0.877);transform-origin:100% 50%;">163</div>
<div class="t" style="top:223.94px;font-size:9.7px;line-height:12px;color:#222;left:288.5px;width:60px;text-align:right;transform:scaleX(0.877);transform-origin:100% 50%;">135</div>
<div class="t" style="top:223.94px;font-size:9.7px;line-height:12px;color:#222;left:356.3px;width:60px;text-align:right;transform:scaleX(0.877);transform-origin:100% 50%;">100</div>
<div class="t" style="top:223.94px;font-size:9.7px;line-height:12px;color:#222;left:424.1px;width:60px;text-align:right;transform:scaleX(0.877);transform-origin:100% 50%;">173</div>
<div class="t" style="top:223.94px;font-size:9.7px;line-height:12px;color:#222;left:491.9px;width:60px;text-align:right;transform:scaleX(0.877);transform-origin:100% 50%;">104</div>
<div class="t" style="top:223.94px;font-size:9.7px;line-height:12px;color:#222;left:559.7px;width:60px;text-align:right;transform:scaleX(0.877);transform-origin:100% 50%;">141</div>
<div class="t" style="top:223.94px;font-size:9.7px;line-height:12px;color:#222;left:627.5px;width:60px;text-align:right;transform:scaleX(0.877);transform-origin:100% 50%;">173</div>
<div class="t" style="top:223.94px;font-size:9.7px;line-height:12px;color:#222;left:695.3px;width:60px;text-align:right;transform:scaleX(0.877);transform-origin:100% 50%;">323</div>
<div class="t" style="top:223.94px;font-size:9.7px;line-height:12px;color:#222;left:763.1px;width:60px;text-align:right;transform:scaleX(0.877);transform-origin:100% 50%;">185</div>
<div class="t" style="top:223.94px;font-size:9.7px;line-height:12px;color:#222;left:830.9px;width:60px;text-align:right;transform:scaleX(0.877);transform-origin:100% 50%;">154</div>
<div class="t" style="top:223.94px;font-size:9.7px;line-height:12px;color:#222;left:898.7px;width:60px;text-align:right;transform:scaleX(0.877);transform-origin:100% 50%;">113</div>
<div class="t" style="top:223.94px;font-size:9.7px;line-height:12px;color:#222;left:966.5px;width:60px;text-align:right;transform:scaleX(0.877);transform-origin:100% 50%;">195</div>
<div class="t" style="top:223.94px;font-size:9.7px;line-height:12px;color:#222;left:1051.2px;width:60px;text-align:right;transform:scaleX(0.877);transform-origin:100% 50%;">118</div>
<div class="t" style="top:223.94px;font-size:9.7px;line-height:12px;color:#222;left:1119px;width:60px;text-align:right;transform:scaleX(0.877);transform-origin:100% 50%;">158</div>
<div class="t" style="top:223.94px;font-size:9.7px;line-height:12px;color:#222;left:1186.8px;width:60px;text-align:right;transform:scaleX(0.877);transform-origin:100% 50%;">184</div>
<div style="left:220px;top:79px;width:69px;height:18.5px;border:1px solid #5a82c4;box-sizing:border-box;"></div>
<div style="left:5px;top:249.5px;width:360px;height:2px;background:#c6d4f0;"></div>
<svg class="a" style="left:1px;top:248px" width="4" height="5" viewBox="0 0 4 5"><path d="M3.5 0.3v4.4L0.3 2.5z" fill="#222"/></svg>
<svg class="a" style="left:1277px;top:248px" width="4" height="5" viewBox="0 0 4 5"><path d="M0.5 0.3v4.4L3.7 2.5z" fill="#222"/></svg>
<div style="left:1px;top:254px;width:1280px;height:4px;background:#c3d0ea;"></div>
<!--BOTTOM-->
<div style="left:425px;top:278px;width:856px;height:2px;background:#e0e5f0;"></div>
<div style="left:3px;top:281px;width:1277px;height:2px;background:#b6c6e8;"></div>
<div style="left:166px;top:263px;width:120px;height:16px;background:#cfdcf5;border:1px solid #a9bde6;border-bottom:1px solid #b9c8e6;box-sizing:border-box;"></div>
<div style="left:286px;top:263px;width:139.5px;height:16px;background:#cfdcf5;border:1px solid #a9bde6;border-left:none;border-bottom:1px solid #b9c8e6;box-sizing:border-box;"></div>
<div style="left:2px;top:261px;width:164.5px;height:18.5px;background:#fff;border:1px solid #a9bde6;border-bottom:none;box-sizing:border-box;"></div>
<div style="left:3px;top:279px;width:163px;height:3px;background:#fff;"></div>
<div style="left:3px;top:282px;width:163px;height:1px;background:#d3dcf2;"></div>
<div class="t" style="top:263.94px;font-size:9.7px;line-height:12px;color:#222;left:8.5px;transform:scaleX(0.895);transform-origin:0 50%;">Upside Scenario Variances to Baseline</div>
<div class="t" style="top:265.64px;font-size:9.7px;line-height:12px;color:#222;left:173.6px;transform:scaleX(0.927);transform-origin:0 50%;">Upside Scenario by Month</div>
<div class="t" style="top:265.64px;font-size:9.7px;line-height:12px;color:#222;left:294.9px;transform:scaleX(0.888);transform-origin:0 50%;">Cash Flow Chart (All Scenarios)</div>
<div style="left:1px;top:261px;width:2px;height:373px;background:#b7c3dc;"></div>
<div style="left:3px;top:283px;width:187.8px;height:29.3px;background:#e8eefa;"></div>
<div style="left:14px;top:289px;width:152px;height:16px;border:1px solid #c6d3ee;box-sizing:border-box;"></div>
<div style="left:190px;top:283px;width:1px;height:29.3px;background:#d5def1;"></div>
<div style="left:3px;top:311.3px;width:188px;height:1px;background:#d5def1;"></div>
<svg class="a" style="left:3.5px;top:284px" width="6" height="6" viewBox="0 0 6 6"><path d="M0 0h5.4L0 5.4z" fill="#2d5fc4"/></svg>
<div style="left:3px;top:329.8px;width:187.8px;height:17.6px;background:#f5f6fa;"></div>
<div style="left:3px;top:400.1px;width:187.8px;height:17.5px;background:#f5f6fa;"></div>
<div style="left:3px;top:435.2px;width:187.8px;height:17.5px;background:#f5f6fa;"></div>
<div style="left:3px;top:505.7px;width:187.8px;height:17.7px;background:#f5f6fa;"></div>
<div style="left:3px;top:576.4px;width:187.8px;height:17.8px;background:#f5f6fa;"></div>
<div class="t" style="top:313.54px;font-size:9.7px;line-height:12px;color:#737883;left:14px;transform:scaleX(0.893);transform-origin:0 50%;">Total Revenue</div>
<div class="t" style="top:331.04px;font-size:9.7px;line-height:12px;color:#737883;left:14px;transform:scaleX(0.938);transform-origin:0 50%;">Cost of good sold</div>
<div class="t" style="top:348.64px;font-size:9.7px;line-height:12px;color:#737883;left:14px;transform:scaleX(0.904);transform-origin:0 50%;">Gross Profit</div>
<div class="t" style="top:383.74px;font-size:9.7px;line-height:12px;color:#737883;left:14px;transform:scaleX(0.885);transform-origin:0 50%;">Salaries and Wages</div>
<div class="t" style="top:401.34px;font-size:9.7px;line-height:12px;color:#737883;left:14px;transform:scaleX(0.906);transform-origin:0 50%;">Other Operating Expenses</div>
<div class="t" style="top:418.84px;font-size:9.7px;line-height:12px;color:#555a63;left:14px;font-weight:bold;transform:scaleX(0.864);transform-origin:0 50%;">EBITDA</div>
<div class="t" style="top:436.44px;font-size:9.7px;line-height:12px;color:#737883;left:14px;transform:scaleX(0.902);transform-origin:0 50%;">Depreciation Expense</div>
<div class="t" style="top:453.94px;font-size:9.7px;line-height:12px;color:#555a63;left:14px;font-weight:bold;transform:scaleX(0.899);transform-origin:0 50%;">Earnings Before Interest and Taxes (EBIT)</div>
<div class="t" style="top:489.14px;font-size:9.7px;line-height:12px;color:#737883;left:14px;transform:scaleX(0.904);transform-origin:0 50%;">Income tax expense</div>
<div class="t" style="top:506.94px;font-size:9.7px;line-height:12px;color:#555a63;left:14px;font-weight:bold;transform:scaleX(0.943);transform-origin:0 50%;">Net Operating Profit after Tax (NOPAT)</div>
<div class="t" style="top:542.24px;font-size:9.7px;line-height:12px;color:#555a63;left:14px;font-weight:bold;transform:scaleX(1.006);transform-origin:0 50%;">A/R</div>
<div class="t" style="top:559.94px;font-size:9.7px;line-height:12px;color:#737883;left:30.9px;transform:scaleX(0.896);transform-origin:0 50%;">Beginning Balance</div>
<div class="t" style="top:577.64px;font-size:9.7px;line-height:12px;color:#737883;left:30.9px;transform:scaleX(0.889);transform-origin:0 50%;">Change</div>
<div class="t" style="top:595.44px;font-size:9.7px;line-height:12px;color:#737883;left:30.9px;transform:scaleX(0.883);transform-origin:0 50%;">Ending Balance</div>
<div style="left:191px;top:312px;width:14px;height:18px;background:#fff;border:1px solid #7d9ccf;box-sizing:border-box;"></div>
<div style="left:204.6px;top:283px;width:67.5px;height:29.3px;background:#dce5f7;"></div>
<div class="t" style="top:283.71px;font-size:9.5px;line-height:12px;color:#7b808b;left:207.4px;transform:scaleX(0.885);transform-origin:0 50%;">Year</div>
<div class="t" style="top:298.81px;font-size:9.5px;line-height:12px;color:#7b808b;left:207.4px;transform:scaleX(0.885);transform-origin:0 50%;">2018</div>
<div style="left:285.85px;top:283px;width:271.2px;height:29.3px;background:#dce5f7;"></div>
<div class="t" style="top:283.71px;font-size:9.5px;line-height:12px;color:#7b808b;left:288.65px;transform:scaleX(0.885);transform-origin:0 50%;">Baseline</div>
<div class="t" style="top:298.81px;font-size:9.5px;line-height:12px;color:#7b808b;left:288.65px;transform:scaleX(0.885);transform-origin:0 50%;">2019</div>
<div class="t" style="top:283.71px;font-size:9.5px;line-height:12px;color:#7b808b;left:356.45px;transform:scaleX(0.885);transform-origin:0 50%;">Upside</div>
<div class="t" style="top:298.81px;font-size:9.5px;line-height:12px;color:#7b808b;left:356.45px;transform:scaleX(0.885);transform-origin:0 50%;">2019</div>
<div class="t" style="top:283.71px;font-size:9.5px;line-height:12px;color:#7b808b;left:424.25px;transform:scaleX(0.885);transform-origin:0 50%;">Var $</div>
<div class="t" style="top:298.81px;font-size:9.5px;line-height:12px;color:#7b808b;left:424.25px;transform:scaleX(0.885);transform-origin:0 50%;">2019</div>
<div class="t" style="top:283.71px;font-size:9.5px;line-height:12px;color:#7b808b;left:492.05px;transform:scaleX(0.885);transform-origin:0 50%;">Var $</div>
<div class="t" style="top:298.81px;font-size:9.5px;line-height:12px;color:#7b808b;left:492.05px;transform:scaleX(0.885);transform-origin:0 50%;">2019</div>
<div style="left:570.45px;top:283px;width:271.2px;height:29.3px;background:#dce5f7;"></div>
<div class="t" style="top:283.71px;font-size:9.5px;line-height:12px;color:#7b808b;left:573.25px;transform:scaleX(0.885);transform-origin:0 50%;">Baseline</div>
<div class="t" style="top:298.81px;font-size:9.5px;line-height:12px;color:#7b808b;left:573.25px;transform:scaleX(0.885);transform-origin:0 50%;">2020</div>
<div class="t" style="top:283.71px;font-size:9.5px;line-height:12px;color:#7b808b;left:641.05px;transform:scaleX(0.885);transform-origin:0 50%;">Upside</div>
<div class="t" style="top:298.81px;font-size:9.5px;line-height:12px;color:#7b808b;left:641.05px;transform:scaleX(0.885);transform-origin:0 50%;">2020</div>
<div class="t" style="top:283.71px;font-size:9.5px;line-height:12px;color:#7b808b;left:708.85px;transform:scaleX(0.885);transform-origin:0 50%;">Var $</div>
<div class="t" style="top:298.81px;font-size:9.5px;line-height:12px;color:#7b808b;left:708.85px;transform:scaleX(0.885);transform-origin:0 50%;">2020</div>
<div class="t" style="top:283.71px;font-size:9.5px;line-height:12px;color:#7b808b;left:776.65px;transform:scaleX(0.885);transform-origin:0 50%;">Var $</div>
<div class="t" style="top:298.81px;font-size:9.5px;line-height:12px;color:#7b808b;left:776.65px;transform:scaleX(0.885);transform-origin:0 50%;">2020</div>
<div style="left:855.05px;top:283px;width:271.2px;height:29.3px;background:#dce5f7;"></div>
<div class="t" style="top:283.71px;font-size:9.5px;line-height:12px;color:#7b808b;left:857.85px;transform:scaleX(0.885);transform-origin:0 50%;">Baseline</div>
<div class="t" style="top:298.81px;font-size:9.5px;line-height:12px;color:#7b808b;left:857.85px;transform:scaleX(0.885);transform-origin:0 50%;">2021</div>
<div class="t" style="top:283.71px;font-size:9.5px;line-height:12px;color:#7b808b;left:925.65px;transform:scaleX(0.885);transform-origin:0 50%;">Upside</div>
<div class="t" style="top:298.81px;font-size:9.5px;line-height:12px;color:#7b808b;left:925.65px;transform:scaleX(0.885);transform-origin:0 50%;">2021</div>
<div class="t" style="top:283.71px;font-size:9.5px;line-height:12px;color:#7b808b;left:993.45px;transform:scaleX(0.885);transform-origin:0 50%;">Var $</div>
<div class="t" style="top:298.81px;font-size:9.5px;line-height:12px;color:#7b808b;left:993.45px;transform:scaleX(0.885);transform-origin:0 50%;">2021</div>
<div class="t" style="top:283.71px;font-size:9.5px;line-height:12px;color:#7b808b;left:1061.25px;transform:scaleX(0.885);transform-origin:0 50%;">Var $</div>
<div class="t" style="top:298.81px;font-size:9.5px;line-height:12px;color:#7b808b;left:1061.25px;transform:scaleX(0.885);transform-origin:0 50%;">2021</div>
<div style="left:1139.65px;top:283px;width:131.15px;height:29.3px;background:#dce5f7;"></div>
<div class="t" style="top:283.71px;font-size:9.5px;line-height:12px;color:#7b808b;left:1142.45px;transform:scaleX(0.885);transform-origin:0 50%;">Baseline</div>
<div class="t" style="top:298.81px;font-size:9.5px;line-height:12px;color:#7b808b;left:1142.45px;transform:scaleX(0.885);transform-origin:0 50%;">2022</div>
<div class="t" style="top:283.71px;font-size:9.5px;line-height:12px;color:#7b808b;left:1210.25px;transform:scaleX(0.885);transform-origin:0 50%;">Upside</div>
<div class="t" style="top:298.81px;font-size:9.5px;line-height:12px;color:#7b808b;left:1210.25px;transform:scaleX(0.885);transform-origin:0 50%;">2022</div>
<div style="left:489.25px;top:312.3px;width:67.8px;height:320.7px;background:#f5f6fb;"></div>
<div style="left:773.85px;top:312.3px;width:67.8px;height:320.7px;background:#f5f6fb;"></div>
<div style="left:1058.45px;top:312.3px;width:67.8px;height:320.7px;background:#f5f6fb;"></div>
<div style="left:204.6px;top:312.3px;width:67.5px;height:17.5px;background:#dce5f7;"></div>
<div class="t" style="top:315.44px;font-size:9.7px;line-height:12px;color:#222;left:199.9px;width:64px;text-align:right;transform:scaleX(0.877);transform-origin:100% 50%;">172,222,530</div>
<div style="left:285.85px;top:312.3px;width:135.6px;height:17.5px;background:#dce5f7;"></div>
<div style="left:421.45px;top:312.3px;width:67.8px;height:17.5px;background:#f4f4f4;"></div>
<div style="left:489.25px;top:312.3px;width:67.8px;height:17.5px;background:#f7ec9b;"></div>
<div class="t" style="top:315.44px;font-size:9.7px;line-height:12px;color:#222;left:281.45px;width:64px;text-align:right;transform:scaleX(0.877);transform-origin:100% 50%;">189,035,457</div>
<div class="t" style="top:315.44px;font-size:9.7px;line-height:12px;color:#222;left:349.25px;width:64px;text-align:right;transform:scaleX(0.877);transform-origin:100% 50%;">186,058,633</div>
<div class="t" style="top:315.44px;font-size:9.7px;line-height:12px;color:#c4423f;left:417.05px;width:64px;text-align:right;transform:scaleX(0.877);transform-origin:100% 50%;">-2,976,824</div>
<div class="t" style="top:315.44px;font-size:9.7px;line-height:12px;color:#c4423f;left:484.85px;width:64px;text-align:right;transform:scaleX(0.877);transform-origin:100% 50%;">-1.6%</div>
<div style="left:570.45px;top:312.3px;width:135.6px;height:17.5px;background:#dce5f7;"></div>
<div style="left:706.05px;top:312.3px;width:67.8px;height:17.5px;background:#f4f4f4;"></div>
<div style="left:773.85px;top:312.3px;width:67.8px;height:17.5px;background:#92e8b2;"></div>
<div class="t" style="top:315.44px;font-size:9.7px;line-height:12px;color:#222;left:566.05px;width:64px;text-align:right;transform:scaleX(0.877);transform-origin:100% 50%;">212,235,232</div>
<div class="t" style="top:315.44px;font-size:9.7px;line-height:12px;color:#222;left:633.85px;width:64px;text-align:right;transform:scaleX(0.877);transform-origin:100% 50%;">215,754,357</div>
<div class="t" style="top:315.44px;font-size:9.7px;line-height:12px;color:#222;left:701.65px;width:64px;text-align:right;transform:scaleX(0.877);transform-origin:100% 50%;">3,519,125</div>
<div class="t" style="top:315.44px;font-size:9.7px;line-height:12px;color:#222;left:769.45px;width:64px;text-align:right;transform:scaleX(0.877);transform-origin:100% 50%;">1.7%</div>
<div style="left:855.05px;top:312.3px;width:135.6px;height:17.5px;background:#dce5f7;"></div>
<div style="left:990.65px;top:312.3px;width:67.8px;height:17.5px;background:#f4f4f4;"></div>
<div style="left:1058.45px;top:312.3px;width:67.8px;height:17.5px;background:#74bfa3;"></div>
<div class="t" style="top:315.44px;font-size:9.7px;line-height:12px;color:#222;left:850.65px;width:64px;text-align:right;transform:scaleX(0.877);transform-origin:100% 50%;">232,777,085</div>
<div class="t" style="top:315.44px;font-size:9.7px;line-height:12px;color:#222;left:918.45px;width:64px;text-align:right;transform:scaleX(0.877);transform-origin:100% 50%;">244,519,813</div>
<div class="t" style="top:315.44px;font-size:9.7px;line-height:12px;color:#222;left:986.25px;width:64px;text-align:right;transform:scaleX(0.877);transform-origin:100% 50%;">11,742,728</div>
<div class="t" style="top:315.44px;font-size:9.7px;line-height:12px;color:#222;left:1054.05px;width:64px;text-align:right;transform:scaleX(0.877);transform-origin:100% 50%;">5.0%</div>
<div style="left:1139.65px;top:312.3px;width:131.15px;height:17.5px;background:#dce5f7;"></div>
<div class="t" style="top:315.44px;font-size:9.7px;line-height:12px;color:#222;left:1135.25px;width:64px;text-align:right;transform:scaleX(0.877);transform-origin:100% 50%;">264,863,547</div>
<div class="t" style="top:315.44px;font-size:9.7px;line-height:12px;color:#222;left:1203.05px;width:64px;text-align:right;transform:scaleX(0.877);transform-origin:100% 50%;">287,381,592</div>
<div style="left:204.6px;top:329.8px;width:67.5px;height:17.6px;background:#dce5f7;"></div>
<div class="t" style="top:332.94px;font-size:9.7px;line-height:12px;color:#222;left:199.9px;width:64px;text-align:right;transform:scaleX(0.877);transform-origin:100% 50%;">92,390,274</div>
<div style="left:285.85px;top:329.8px;width:135.6px;height:17.6px;background:#dce5f7;"></div>
<div style="left:421.45px;top:329.8px;width:67.8px;height:17.6px;background:#f4f4f4;"></div>
<div style="left:489.25px;top:329.8px;width:67.8px;height:17.6px;background:#5b8c60;"></div>
<div class="t" style="top:332.94px;font-size:9.7px;line-height:12px;color:#222;left:281.45px;width:64px;text-align:right;transform:scaleX(0.877);transform-origin:100% 50%;">100,991,736</div>
<div class="t" style="top:332.94px;font-size:9.7px;line-height:12px;color:#222;left:349.25px;width:64px;text-align:right;transform:scaleX(0.877);transform-origin:100% 50%;">83,703,884</div>
<div class="t" style="top:332.94px;font-size:9.7px;line-height:12px;color:#222;left:417.05px;width:64px;text-align:right;transform:scaleX(0.877);transform-origin:100% 50%;">17,287,852</div>
<div class="t" style="top:332.94px;font-size:9.7px;line-height:12px;color:#fff;left:484.85px;width:64px;text-align:right;transform:scaleX(0.877);transform-origin:100% 50%;">17.1%</div>
<div style="left:570.45px;top:329.8px;width:135.6px;height:17.6px;background:#dce5f7;"></div>
<div style="left:706.05px;top:329.8px;width:67.8px;height:17.6px;background:#f4f4f4;"></div>
<div style="left:773.85px;top:329.8px;width:67.8px;height:17.6px;background:#5b8c60;"></div>
<div class="t" style="top:332.94px;font-size:9.7px;line-height:12px;color:#222;left:566.05px;width:64px;text-align:right;transform:scaleX(0.877);transform-origin:100% 50%;">113,805,597</div>
<div class="t" style="top:332.94px;font-size:9.7px;line-height:12px;color:#222;left:633.85px;width:64px;text-align:right;transform:scaleX(0.877);transform-origin:100% 50%;">97,516,121</div>
<div class="t" style="top:332.94px;font-size:9.7px;line-height:12px;color:#222;left:701.65px;width:64px;text-align:right;transform:scaleX(0.877);transform-origin:100% 50%;">16,289,476</div>
<div class="t" style="top:332.94px;font-size:9.7px;line-height:12px;color:#fff;left:769.45px;width:64px;text-align:right;transform:scaleX(0.877);transform-origin:100% 50%;">14.3%</div>
<div style="left:855.05px;top:329.8px;width:135.6px;height:17.6px;background:#dce5f7;"></div>
<div style="left:990.65px;top:329.8px;width:67.8px;height:17.6px;background:#f4f4f4;"></div>
<div style="left:1058.45px;top:329.8px;width:67.8px;height:17.6px;background:#5b8c60;"></div>
<div class="t" style="top:332.94px;font-size:9.7px;line-height:12px;color:#222;left:850.65px;width:64px;text-align:right;transform:scaleX(0.877);transform-origin:100% 50%;">125,004,347</div>
<div class="t" style="top:332.94px;font-size:9.7px;line-height:12px;color:#222;left:918.45px;width:64px;text-align:right;transform:scaleX(0.877);transform-origin:100% 50%;">110,770,315</div>
<div class="t" style="top:332.94px;font-size:9.7px;line-height:12px;color:#222;left:986.25px;width:64px;text-align:right;transform:scaleX(0.877);transform-origin:100% 50%;">14,234,032</div>
<div class="t" style="top:332.94px;font-size:9.7px;line-height:12px;color:#fff;left:1054.05px;width:64px;text-align:right;transform:scaleX(0.877);transform-origin:100% 50%;">11.4%</div>
<div style="left:1139.65px;top:329.8px;width:131.15px;height:17.6px;background:#dce5f7;"></div>
<div class="t" style="top:332.94px;font-size:9.7px;line-height:12px;color:#222;left:1135.25px;width:64px;text-align:right;transform:scaleX(0.877);transform-origin:100% 50%;">141,775,688</div>
<div class="t" style="top:332.94px;font-size:9.7px;line-height:12px;color:#222;left:1203.05px;width:64px;text-align:right;transform:scaleX(0.877);transform-origin:100% 50%;">129,595,216</div>
<div style="left:204.6px;top:347.4px;width:67.5px;height:17.5px;background:#dce5f7;"></div>
<div class="t" style="top:350.54px;font-size:9.7px;line-height:12px;color:#222;left:199.9px;width:64px;text-align:right;transform:scaleX(0.877);transform-origin:100% 50%;">79,832,256</div>
<div style="left:285.85px;top:347.4px;width:135.6px;height:17.5px;background:#dce5f7;"></div>
<div style="left:421.45px;top:347.4px;width:67.8px;height:17.5px;background:#f4f4f4;"></div>
<div style="left:489.25px;top:347.4px;width:67.8px;height:17.5px;background:#5b8c60;"></div>
<div class="t" style="top:350.54px;font-size:9.7px;line-height:12px;color:#222;left:281.45px;width:64px;text-align:right;transform:scaleX(0.877);transform-origin:100% 50%;">88,043,722</div>
<div class="t" style="top:350.54px;font-size:9.7px;line-height:12px;color:#222;left:349.25px;width:64px;text-align:right;transform:scaleX(0.877);transform-origin:100% 50%;">102,354,749</div>
<div class="t" style="top:350.54px;font-size:9.7px;line-height:12px;color:#222;left:417.05px;width:64px;text-align:right;transform:scaleX(0.877);transform-origin:100% 50%;">14,311,027</div>
<div class="t" style="top:350.54px;font-size:9.7px;line-height:12px;color:#fff;left:484.85px;width:64px;text-align:right;transform:scaleX(0.877);transform-origin:100% 50%;">16.3%</div>
<div style="left:570.45px;top:347.4px;width:135.6px;height:17.5px;background:#dce5f7;"></div>
<div style="left:706.05px;top:347.4px;width:67.8px;height:17.5px;background:#f4f4f4;"></div>
<div style="left:773.85px;top:347.4px;width:67.8px;height:17.5px;background:#00916b;"></div>
<div class="t" style="top:350.54px;font-size:9.7px;line-height:12px;color:#222;left:566.05px;width:64px;text-align:right;transform:scaleX(0.877);transform-origin:100% 50%;">98,429,635</div>
<div class="t" style="top:350.54px;font-size:9.7px;line-height:12px;color:#222;left:633.85px;width:64px;text-align:right;transform:scaleX(0.877);transform-origin:100% 50%;">118,238,236</div>
<div class="t" style="top:350.54px;font-size:9.7px;line-height:12px;color:#222;left:701.65px;width:64px;text-align:right;transform:scaleX(0.877);transform-origin:100% 50%;">19,808,601</div>
<div class="t" style="top:350.54px;font-size:9.7px;line-height:12px;color:#fff;left:769.45px;width:64px;text-align:right;transform:scaleX(0.877);transform-origin:100% 50%;">20.1%</div>
<div style="left:855.05px;top:347.4px;width:135.6px;height:17.5px;background:#dce5f7;"></div>
<div style="left:990.65px;top:347.4px;width:67.8px;height:17.5px;background:#f4f4f4;"></div>
<div style="left:1058.45px;top:347.4px;width:67.8px;height:17.5px;background:#00916b;"></div>
<div class="t" style="top:350.54px;font-size:9.7px;line-height:12px;color:#222;left:850.65px;width:64px;text-align:right;transform:scaleX(0.877);transform-origin:100% 50%;">107,772,738</div>
<div class="t" style="top:350.54px;font-size:9.7px;line-height:12px;color:#222;left:918.45px;width:64px;text-align:right;transform:scaleX(0.877);transform-origin:100% 50%;">133,749,498</div>
<div class="t" style="top:350.54px;font-size:9.7px;line-height:12px;color:#222;left:986.25px;width:64px;text-align:right;transform:scaleX(0.877);transform-origin:100% 50%;">25,976,760</div>
<div class="t" style="top:350.54px;font-size:9.7px;line-height:12px;color:#fff;left:1054.05px;width:64px;text-align:right;transform:scaleX(0.877);transform-origin:100% 50%;">24.1%</div>
<div style="left:1139.65px;top:347.4px;width:131.15px;height:17.5px;background:#dce5f7;"></div>
<div class="t" style="top:350.54px;font-size:9.7px;line-height:12px;color:#222;left:1135.25px;width:64px;text-align:right;transform:scaleX(0.877);transform-origin:100% 50%;">123,087,859</div>
<div class="t" style="top:350.54px;font-size:9.7px;line-height:12px;color:#222;left:1203.05px;width:64px;text-align:right;transform:scaleX(0.877);transform-origin:100% 50%;">157,786,375</div>
<div style="left:204.6px;top:382.5px;width:67.5px;height:17.6px;background:#dce5f7;"></div>
<div class="t" style="top:385.64px;font-size:9.7px;line-height:12px;color:#222;left:199.9px;width:64px;text-align:right;transform:scaleX(0.877);transform-origin:100% 50%;">30,321,428</div>
<div style="left:285.85px;top:382.5px;width:135.6px;height:17.6px;background:#dce5f7;"></div>
<div style="left:421.45px;top:382.5px;width:67.8px;height:17.6px;background:#f4f4f4;"></div>
<div style="left:489.25px;top:382.5px;width:67.8px;height:17.6px;background:#f0f36c;"></div>
<div class="t" style="top:385.64px;font-size:9.7px;line-height:12px;color:#222;left:281.45px;width:64px;text-align:right;transform:scaleX(0.877);transform-origin:100% 50%;">31,033,320</div>
<div class="t" style="top:385.64px;font-size:9.7px;line-height:12px;color:#222;left:349.25px;width:64px;text-align:right;transform:scaleX(0.877);transform-origin:100% 50%;">32,292,002</div>
<div class="t" style="top:385.64px;font-size:9.7px;line-height:12px;color:#c4423f;left:417.05px;width:64px;text-align:right;transform:scaleX(0.877);transform-origin:100% 50%;">-1,258,682</div>
<div class="t" style="top:385.64px;font-size:9.7px;line-height:12px;color:#c4423f;left:484.85px;width:64px;text-align:right;transform:scaleX(0.877);transform-origin:100% 50%;">-4.1%</div>
<div style="left:570.45px;top:382.5px;width:135.6px;height:17.6px;background:#dce5f7;"></div>
<div style="left:706.05px;top:382.5px;width:67.8px;height:17.6px;background:#f4f4f4;"></div>
<div style="left:773.85px;top:382.5px;width:67.8px;height:17.6px;background:#f0f36c;"></div>
<div class="t" style="top:385.64px;font-size:9.7px;line-height:12px;color:#222;left:566.05px;width:64px;text-align:right;transform:scaleX(0.877);transform-origin:100% 50%;">35,049,379</div>
<div class="t" style="top:385.64px;font-size:9.7px;line-height:12px;color:#222;left:633.85px;width:64px;text-align:right;transform:scaleX(0.877);transform-origin:100% 50%;">37,516,158</div>
<div class="t" style="top:385.64px;font-size:9.7px;line-height:12px;color:#c4423f;left:701.65px;width:64px;text-align:right;transform:scaleX(0.877);transform-origin:100% 50%;">-2,466,779</div>
<div class="t" style="top:385.64px;font-size:9.7px;line-height:12px;color:#c4423f;left:769.45px;width:64px;text-align:right;transform:scaleX(0.877);transform-origin:100% 50%;">-7.0%</div>
<div style="left:855.05px;top:382.5px;width:135.6px;height:17.6px;background:#dce5f7;"></div>
<div style="left:990.65px;top:382.5px;width:67.8px;height:17.6px;background:#f4f4f4;"></div>
<div style="left:1058.45px;top:382.5px;width:67.8px;height:17.6px;background:#c6413f;"></div>
<div class="t" style="top:385.64px;font-size:9.7px;line-height:12px;color:#222;left:850.65px;width:64px;text-align:right;transform:scaleX(0.877);transform-origin:100% 50%;">38,299,209</div>
<div class="t" style="top:385.64px;font-size:9.7px;line-height:12px;color:#222;left:918.45px;width:64px;text-align:right;transform:scaleX(0.877);transform-origin:100% 50%;">42,360,198</div>
<div class="t" style="top:385.64px;font-size:9.7px;line-height:12px;color:#c4423f;left:986.25px;width:64px;text-align:right;transform:scaleX(0.877);transform-origin:100% 50%;">-4,060,989</div>
<div class="t" style="top:385.64px;font-size:9.7px;line-height:12px;color:#fff;left:1054.05px;width:64px;text-align:right;transform:scaleX(0.877);transform-origin:100% 50%;">-10.6%</div>
<div style="left:1139.65px;top:382.5px;width:131.15px;height:17.6px;background:#dce5f7;"></div>
<div class="t" style="top:385.64px;font-size:9.7px;line-height:12px;color:#222;left:1135.25px;width:64px;text-align:right;transform:scaleX(0.877);transform-origin:100% 50%;">43,688,557</div>
<div class="t" style="top:385.64px;font-size:9.7px;line-height:12px;color:#222;left:1203.05px;width:64px;text-align:right;transform:scaleX(0.877);transform-origin:100% 50%;">49,911,842</div>
<div style="left:204.6px;top:400.1px;width:67.5px;height:17.5px;background:#dce5f7;"></div>
<div class="t" style="top:403.24px;font-size:9.7px;line-height:12px;color:#222;left:199.9px;width:64px;text-align:right;transform:scaleX(0.877);transform-origin:100% 50%;">9,629,343</div>
<div style="left:285.85px;top:400.1px;width:135.6px;height:17.5px;background:#dce5f7;"></div>
<div style="left:421.45px;top:400.1px;width:67.8px;height:17.5px;background:#f4f4f4;"></div>
<div style="left:489.25px;top:400.1px;width:67.8px;height:17.5px;background:#00916b;"></div>
<div class="t" style="top:403.24px;font-size:9.7px;line-height:12px;color:#222;left:281.45px;width:64px;text-align:right;transform:scaleX(0.877);transform-origin:100% 50%;">11,536,324</div>
<div class="t" style="top:403.24px;font-size:9.7px;line-height:12px;color:#222;left:349.25px;width:64px;text-align:right;transform:scaleX(0.877);transform-origin:100% 50%;">9,039,425</div>
<div class="t" style="top:403.24px;font-size:9.7px;line-height:12px;color:#222;left:417.05px;width:64px;text-align:right;transform:scaleX(0.877);transform-origin:100% 50%;">2,496,899</div>
<div class="t" style="top:403.24px;font-size:9.7px;line-height:12px;color:#fff;left:484.85px;width:64px;text-align:right;transform:scaleX(0.877);transform-origin:100% 50%;">21.6%</div>
<div style="left:570.45px;top:400.1px;width:135.6px;height:17.5px;background:#dce5f7;"></div>
<div style="left:706.05px;top:400.1px;width:67.8px;height:17.5px;background:#f4f4f4;"></div>
<div style="left:773.85px;top:400.1px;width:67.8px;height:17.5px;background:#5b8c60;"></div>
<div class="t" style="top:403.24px;font-size:9.7px;line-height:12px;color:#222;left:566.05px;width:64px;text-align:right;transform:scaleX(0.877);transform-origin:100% 50%;">12,933,044</div>
<div class="t" style="top:403.24px;font-size:9.7px;line-height:12px;color:#222;left:633.85px;width:64px;text-align:right;transform:scaleX(0.877);transform-origin:100% 50%;">10,647,408</div>
<div class="t" style="top:403.24px;font-size:9.7px;line-height:12px;color:#222;left:701.65px;width:64px;text-align:right;transform:scaleX(0.877);transform-origin:100% 50%;">2,285,637</div>
<div class="t" style="top:403.24px;font-size:9.7px;line-height:12px;color:#fff;left:769.45px;width:64px;text-align:right;transform:scaleX(0.877);transform-origin:100% 50%;">17.7%</div>
<div style="left:855.05px;top:400.1px;width:135.6px;height:17.5px;background:#dce5f7;"></div>
<div style="left:990.65px;top:400.1px;width:67.8px;height:17.5px;background:#f4f4f4;"></div>
<div style="left:1058.45px;top:400.1px;width:67.8px;height:17.5px;background:#5b8c60;"></div>
<div class="t" style="top:403.24px;font-size:9.7px;line-height:12px;color:#222;left:850.65px;width:64px;text-align:right;transform:scaleX(0.877);transform-origin:100% 50%;">14,174,838</div>
<div class="t" style="top:403.24px;font-size:9.7px;line-height:12px;color:#222;left:918.45px;width:64px;text-align:right;transform:scaleX(0.877);transform-origin:100% 50%;">12,066,974</div>
<div class="t" style="top:403.24px;font-size:9.7px;line-height:12px;color:#222;left:986.25px;width:64px;text-align:right;transform:scaleX(0.877);transform-origin:100% 50%;">2,107,864</div>
<div class="t" style="top:403.24px;font-size:9.7px;line-height:12px;color:#fff;left:1054.05px;width:64px;text-align:right;transform:scaleX(0.877);transform-origin:100% 50%;">14.9%</div>
<div style="left:1139.65px;top:400.1px;width:131.15px;height:17.5px;background:#dce5f7;"></div>
<div class="t" style="top:403.24px;font-size:9.7px;line-height:12px;color:#222;left:1135.25px;width:64px;text-align:right;transform:scaleX(0.877);transform-origin:100% 50%;">16,105,814</div>
<div class="t" style="top:403.24px;font-size:9.7px;line-height:12px;color:#222;left:1203.05px;width:64px;text-align:right;transform:scaleX(0.877);transform-origin:100% 50%;">14,182,189</div>
<div style="left:204.6px;top:417.6px;width:67.5px;height:17.6px;background:#dce5f7;"></div>
<div class="t" style="top:420.74px;font-size:9.7px;line-height:12px;color:#222;left:199.9px;width:64px;text-align:right;font-weight:bold;transform:scaleX(0.948);transform-origin:100% 50%;">39,881,485</div>
<div style="left:285.85px;top:417.6px;width:135.6px;height:17.6px;background:#dce5f7;"></div>
<div style="left:421.45px;top:417.6px;width:67.8px;height:17.6px;background:#dce5f7;"></div>
<div style="left:489.25px;top:417.6px;width:67.8px;height:17.6px;background:#00916b;"></div>
<div class="t" style="top:420.74px;font-size:9.7px;line-height:12px;color:#222;left:281.45px;width:64px;text-align:right;font-weight:bold;transform:scaleX(0.948);transform-origin:100% 50%;">45,474,078</div>
<div class="t" style="top:420.74px;font-size:9.7px;line-height:12px;color:#222;left:349.25px;width:64px;text-align:right;font-weight:bold;transform:scaleX(0.948);transform-origin:100% 50%;">61,023,323</div>
<div class="t" style="top:420.74px;font-size:9.7px;line-height:12px;color:#222;left:417.05px;width:64px;text-align:right;font-weight:bold;transform:scaleX(0.948);transform-origin:100% 50%;">15,549,245</div>
<div class="t" style="top:420.74px;font-size:9.7px;line-height:12px;color:#fff;left:484.85px;width:64px;text-align:right;font-weight:bold;transform:scaleX(0.948);transform-origin:100% 50%;">34.2%</div>
<div style="left:570.45px;top:417.6px;width:135.6px;height:17.6px;background:#dce5f7;"></div>
<div style="left:706.05px;top:417.6px;width:67.8px;height:17.6px;background:#dce5f7;"></div>
<div style="left:773.85px;top:417.6px;width:67.8px;height:17.6px;background:#00916b;"></div>
<div class="t" style="top:420.74px;font-size:9.7px;line-height:12px;color:#222;left:566.05px;width:64px;text-align:right;font-weight:bold;transform:scaleX(0.948);transform-origin:100% 50%;">50,447,212</div>
<div class="t" style="top:420.74px;font-size:9.7px;line-height:12px;color:#222;left:633.85px;width:64px;text-align:right;font-weight:bold;transform:scaleX(0.948);transform-origin:100% 50%;">70,074,670</div>
<div class="t" style="top:420.74px;font-size:9.7px;line-height:12px;color:#222;left:701.65px;width:64px;text-align:right;font-weight:bold;transform:scaleX(0.948);transform-origin:100% 50%;">19,627,458</div>
<div class="t" style="top:420.74px;font-size:9.7px;line-height:12px;color:#fff;left:769.45px;width:64px;text-align:right;font-weight:bold;transform:scaleX(0.948);transform-origin:100% 50%;">38.9%</div>
<div style="left:855.05px;top:417.6px;width:135.6px;height:17.6px;background:#dce5f7;"></div>
<div style="left:990.65px;top:417.6px;width:67.8px;height:17.6px;background:#dce5f7;"></div>
<div style="left:1058.45px;top:417.6px;width:67.8px;height:17.6px;background:#00916b;"></div>
<div class="t" style="top:420.74px;font-size:9.7px;line-height:12px;color:#222;left:850.65px;width:64px;text-align:right;font-weight:bold;transform:scaleX(0.948);transform-origin:100% 50%;">55,298,691</div>
<div class="t" style="top:420.74px;font-size:9.7px;line-height:12px;color:#222;left:918.45px;width:64px;text-align:right;font-weight:bold;transform:scaleX(0.948);transform-origin:100% 50%;">79,322,326</div>
<div class="t" style="top:420.74px;font-size:9.7px;line-height:12px;color:#222;left:986.25px;width:64px;text-align:right;font-weight:bold;transform:scaleX(0.948);transform-origin:100% 50%;">24,023,636</div>
<div class="t" style="top:420.74px;font-size:9.7px;line-height:12px;color:#fff;left:1054.05px;width:64px;text-align:right;font-weight:bold;transform:scaleX(0.948);transform-origin:100% 50%;">43.4%</div>
<div style="left:1139.65px;top:417.6px;width:131.15px;height:17.6px;background:#dce5f7;"></div>
<div class="t" style="top:420.74px;font-size:9.7px;line-height:12px;color:#222;left:1135.25px;width:64px;text-align:right;font-weight:bold;transform:scaleX(0.948);transform-origin:100% 50%;">63,293,487</div>
<div class="t" style="top:420.74px;font-size:9.7px;line-height:12px;color:#222;left:1203.05px;width:64px;text-align:right;font-weight:bold;transform:scaleX(0.948);transform-origin:100% 50%;">93,692,345</div>
<div style="left:204.6px;top:435.2px;width:67.5px;height:17.5px;background:#dce5f7;"></div>
<div class="t" style="top:438.34px;font-size:9.7px;line-height:12px;color:#222;left:199.9px;width:64px;text-align:right;transform:scaleX(0.877);transform-origin:100% 50%;">115,471</div>
<div style="left:285.85px;top:435.2px;width:135.6px;height:17.5px;background:#dce5f7;"></div>
<div style="left:421.45px;top:435.2px;width:67.8px;height:17.5px;background:#f4f4f4;"></div>
<div style="left:489.25px;top:435.2px;width:67.8px;height:17.5px;background:#00916b;"></div>
<div class="t" style="top:438.34px;font-size:9.7px;line-height:12px;color:#222;left:281.45px;width:64px;text-align:right;transform:scaleX(0.877);transform-origin:100% 50%;">759,394</div>
<div class="t" style="top:438.34px;font-size:9.7px;line-height:12px;color:#222;left:349.25px;width:64px;text-align:right;transform:scaleX(0.877);transform-origin:100% 50%;">113,901</div>
<div class="t" style="top:438.34px;font-size:9.7px;line-height:12px;color:#222;left:417.05px;width:64px;text-align:right;transform:scaleX(0.877);transform-origin:100% 50%;">645,493</div>
<div class="t" style="top:438.34px;font-size:9.7px;line-height:12px;color:#fff;left:484.85px;width:64px;text-align:right;transform:scaleX(0.877);transform-origin:100% 50%;">85.0%</div>
<div style="left:570.45px;top:435.2px;width:135.6px;height:17.5px;background:#dce5f7;"></div>
<div style="left:706.05px;top:435.2px;width:67.8px;height:17.5px;background:#f4f4f4;"></div>
<div style="left:773.85px;top:435.2px;width:67.8px;height:17.5px;background:#00916b;"></div>
<div class="t" style="top:438.34px;font-size:9.7px;line-height:12px;color:#222;left:566.05px;width:64px;text-align:right;transform:scaleX(0.877);transform-origin:100% 50%;">769,053</div>
<div class="t" style="top:438.34px;font-size:9.7px;line-height:12px;color:#222;left:633.85px;width:64px;text-align:right;transform:scaleX(0.877);transform-origin:100% 50%;">115,336</div>
<div class="t" style="top:438.34px;font-size:9.7px;line-height:12px;color:#222;left:701.65px;width:64px;text-align:right;transform:scaleX(0.877);transform-origin:100% 50%;">653,718</div>
<div class="t" style="top:438.34px;font-size:9.7px;line-height:12px;color:#fff;left:769.45px;width:64px;text-align:right;transform:scaleX(0.877);transform-origin:100% 50%;">85.0%</div>
<div style="left:855.05px;top:435.2px;width:135.6px;height:17.5px;background:#dce5f7;"></div>
<div style="left:990.65px;top:435.2px;width:67.8px;height:17.5px;background:#f4f4f4;"></div>
<div style="left:1058.45px;top:435.2px;width:67.8px;height:17.5px;background:#00916b;"></div>
<div class="t" style="top:438.34px;font-size:9.7px;line-height:12px;color:#222;left:850.65px;width:64px;text-align:right;transform:scaleX(0.877);transform-origin:100% 50%;">778,712</div>
<div class="t" style="top:438.34px;font-size:9.7px;line-height:12px;color:#222;left:918.45px;width:64px;text-align:right;transform:scaleX(0.877);transform-origin:100% 50%;">116,770</div>
<div class="t" style="top:438.34px;font-size:9.7px;line-height:12px;color:#222;left:986.25px;width:64px;text-align:right;transform:scaleX(0.877);transform-origin:100% 50%;">661,942</div>
<div class="t" style="top:438.34px;font-size:9.7px;line-height:12px;color:#fff;left:1054.05px;width:64px;text-align:right;transform:scaleX(0.877);transform-origin:100% 50%;">85.0%</div>
<div style="left:1139.65px;top:435.2px;width:131.15px;height:17.5px;background:#dce5f7;"></div>
<div class="t" style="top:438.34px;font-size:9.7px;line-height:12px;color:#222;left:1135.25px;width:64px;text-align:right;transform:scaleX(0.877);transform-origin:100% 50%;">788,371</div>
<div class="t" style="top:438.34px;font-size:9.7px;line-height:12px;color:#222;left:1203.05px;width:64px;text-align:right;transform:scaleX(0.877);transform-origin:100% 50%;">118,204</div>
<div style="left:204.6px;top:452.7px;width:67.5px;height:17.5px;background:#dce5f7;"></div>
<div class="t" style="top:455.84px;font-size:9.7px;line-height:12px;color:#222;left:199.9px;width:64px;text-align:right;font-weight:bold;transform:scaleX(0.948);transform-origin:100% 50%;">39,766,014</div>
<div style="left:285.85px;top:452.7px;width:135.6px;height:17.5px;background:#dce5f7;"></div>
<div style="left:421.45px;top:452.7px;width:67.8px;height:17.5px;background:#dce5f7;"></div>
<div style="left:489.25px;top:452.7px;width:67.8px;height:17.5px;background:#00916b;"></div>
<div class="t" style="top:455.84px;font-size:9.7px;line-height:12px;color:#222;left:281.45px;width:64px;text-align:right;font-weight:bold;transform:scaleX(0.948);transform-origin:100% 50%;">44,714,683</div>
<div class="t" style="top:455.84px;font-size:9.7px;line-height:12px;color:#222;left:349.25px;width:64px;text-align:right;font-weight:bold;transform:scaleX(0.948);transform-origin:100% 50%;">60,909,421</div>
<div class="t" style="top:455.84px;font-size:9.7px;line-height:12px;color:#222;left:417.05px;width:64px;text-align:right;font-weight:bold;transform:scaleX(0.948);transform-origin:100% 50%;">16,194,738</div>
<div class="t" style="top:455.84px;font-size:9.7px;line-height:12px;color:#fff;left:484.85px;width:64px;text-align:right;font-weight:bold;transform:scaleX(0.948);transform-origin:100% 50%;">36.2%</div>
<div style="left:570.45px;top:452.7px;width:135.6px;height:17.5px;background:#dce5f7;"></div>
<div style="left:706.05px;top:452.7px;width:67.8px;height:17.5px;background:#dce5f7;"></div>
<div style="left:773.85px;top:452.7px;width:67.8px;height:17.5px;background:#00916b;"></div>
<div class="t" style="top:455.84px;font-size:9.7px;line-height:12px;color:#222;left:566.05px;width:64px;text-align:right;font-weight:bold;transform:scaleX(0.948);transform-origin:100% 50%;">49,678,159</div>
<div class="t" style="top:455.84px;font-size:9.7px;line-height:12px;color:#222;left:633.85px;width:64px;text-align:right;font-weight:bold;transform:scaleX(0.948);transform-origin:100% 50%;">69,959,334</div>
<div class="t" style="top:455.84px;font-size:9.7px;line-height:12px;color:#222;left:701.65px;width:64px;text-align:right;font-weight:bold;transform:scaleX(0.948);transform-origin:100% 50%;">20,281,175</div>
<div class="t" style="top:455.84px;font-size:9.7px;line-height:12px;color:#fff;left:769.45px;width:64px;text-align:right;font-weight:bold;transform:scaleX(0.948);transform-origin:100% 50%;">40.8%</div>
<div style="left:855.05px;top:452.7px;width:135.6px;height:17.5px;background:#dce5f7;"></div>
<div style="left:990.65px;top:452.7px;width:67.8px;height:17.5px;background:#dce5f7;"></div>
<div style="left:1058.45px;top:452.7px;width:67.8px;height:17.5px;background:#00916b;"></div>
<div class="t" style="top:455.84px;font-size:9.7px;line-height:12px;color:#222;left:850.65px;width:64px;text-align:right;font-weight:bold;transform:scaleX(0.948);transform-origin:100% 50%;">54,519,979</div>
<div class="t" style="top:455.84px;font-size:9.7px;line-height:12px;color:#222;left:918.45px;width:64px;text-align:right;font-weight:bold;transform:scaleX(0.948);transform-origin:100% 50%;">79,205,556</div>
<div class="t" style="top:455.84px;font-size:9.7px;line-height:12px;color:#222;left:986.25px;width:64px;text-align:right;font-weight:bold;transform:scaleX(0.948);transform-origin:100% 50%;">24,685,577</div>
<div class="t" style="top:455.84px;font-size:9.7px;line-height:12px;color:#fff;left:1054.05px;width:64px;text-align:right;font-weight:bold;transform:scaleX(0.948);transform-origin:100% 50%;">45.3%</div>
<div style="left:1139.65px;top:452.7px;width:131.15px;height:17.5px;background:#dce5f7;"></div>
<div class="t" style="top:455.84px;font-size:9.7px;line-height:12px;color:#222;left:1135.25px;width:64px;text-align:right;font-weight:bold;transform:scaleX(0.948);transform-origin:100% 50%;">62,505,117</div>
<div class="t" style="top:455.84px;font-size:9.7px;line-height:12px;color:#222;left:1203.05px;width:64px;text-align:right;font-weight:bold;transform:scaleX(0.948);transform-origin:100% 50%;">93,574,141</div>
<div style="left:204.6px;top:487.9px;width:67.5px;height:17.8px;background:#dce5f7;"></div>
<div class="t" style="top:491.04px;font-size:9.7px;line-height:12px;color:#222;left:199.9px;width:64px;text-align:right;transform:scaleX(0.877);transform-origin:100% 50%;">3,722,091</div>
<div style="left:285.85px;top:487.9px;width:135.6px;height:17.8px;background:#dce5f7;"></div>
<div style="left:421.45px;top:487.9px;width:67.8px;height:17.8px;background:#f4f4f4;"></div>
<div style="left:489.25px;top:487.9px;width:67.8px;height:17.8px;background:#c6413f;"></div>
<div class="t" style="top:491.04px;font-size:9.7px;line-height:12px;color:#222;left:281.45px;width:64px;text-align:right;transform:scaleX(0.877);transform-origin:100% 50%;">13,950,981</div>
<div class="t" style="top:491.04px;font-size:9.7px;line-height:12px;color:#222;left:349.25px;width:64px;text-align:right;transform:scaleX(0.877);transform-origin:100% 50%;">18,053,552</div>
<div class="t" style="top:491.04px;font-size:9.7px;line-height:12px;color:#c4423f;left:417.05px;width:64px;text-align:right;transform:scaleX(0.877);transform-origin:100% 50%;">-4,102,571</div>
<div class="t" style="top:491.04px;font-size:9.7px;line-height:12px;color:#fff;left:484.85px;width:64px;text-align:right;transform:scaleX(0.877);transform-origin:100% 50%;">-29.4%</div>
<div style="left:570.45px;top:487.9px;width:135.6px;height:17.8px;background:#dce5f7;"></div>
<div style="left:706.05px;top:487.9px;width:67.8px;height:17.8px;background:#f4f4f4;"></div>
<div style="left:773.85px;top:487.9px;width:67.8px;height:17.8px;background:#c6413f;"></div>
<div class="t" style="top:491.04px;font-size:9.7px;line-height:12px;color:#222;left:566.05px;width:64px;text-align:right;transform:scaleX(0.877);transform-origin:100% 50%;">15,499,585</div>
<div class="t" style="top:491.04px;font-size:9.7px;line-height:12px;color:#222;left:633.85px;width:64px;text-align:right;transform:scaleX(0.877);transform-origin:100% 50%;">20,735,947</div>
<div class="t" style="top:491.04px;font-size:9.7px;line-height:12px;color:#c4423f;left:701.65px;width:64px;text-align:right;transform:scaleX(0.877);transform-origin:100% 50%;">-5,236,361</div>
<div class="t" style="top:491.04px;font-size:9.7px;line-height:12px;color:#fff;left:769.45px;width:64px;text-align:right;transform:scaleX(0.877);transform-origin:100% 50%;">-33.8%</div>
<div style="left:855.05px;top:487.9px;width:135.6px;height:17.8px;background:#dce5f7;"></div>
<div style="left:990.65px;top:487.9px;width:67.8px;height:17.8px;background:#f4f4f4;"></div>
<div style="left:1058.45px;top:487.9px;width:67.8px;height:17.8px;background:#c6413f;"></div>
<div class="t" style="top:491.04px;font-size:9.7px;line-height:12px;color:#222;left:850.65px;width:64px;text-align:right;transform:scaleX(0.877);transform-origin:100% 50%;">17,010,233</div>
<div class="t" style="top:491.04px;font-size:9.7px;line-height:12px;color:#222;left:918.45px;width:64px;text-align:right;transform:scaleX(0.877);transform-origin:100% 50%;">23,476,527</div>
<div class="t" style="top:491.04px;font-size:9.7px;line-height:12px;color:#c4423f;left:986.25px;width:64px;text-align:right;transform:scaleX(0.877);transform-origin:100% 50%;">-6,466,293</div>
<div class="t" style="top:491.04px;font-size:9.7px;line-height:12px;color:#fff;left:1054.05px;width:64px;text-align:right;transform:scaleX(0.877);transform-origin:100% 50%;">-38.0%</div>
<div style="left:1139.65px;top:487.9px;width:131.15px;height:17.8px;background:#dce5f7;"></div>
<div class="t" style="top:491.04px;font-size:9.7px;line-height:12px;color:#222;left:1135.25px;width:64px;text-align:right;transform:scaleX(0.877);transform-origin:100% 50%;">19,501,596</div>
<div class="t" style="top:491.04px;font-size:9.7px;line-height:12px;color:#222;left:1203.05px;width:64px;text-align:right;transform:scaleX(0.877);transform-origin:100% 50%;">27,735,375</div>
<div style="left:204.6px;top:505.7px;width:67.5px;height:17.7px;background:#dce5f7;"></div>
<div class="t" style="top:508.84px;font-size:9.7px;line-height:12px;color:#222;left:199.9px;width:64px;text-align:right;font-weight:bold;transform:scaleX(0.948);transform-origin:100% 50%;">36,043,922</div>
<div style="left:285.85px;top:505.7px;width:135.6px;height:17.7px;background:#dce5f7;"></div>
<div style="left:421.45px;top:505.7px;width:67.8px;height:17.7px;background:#dce5f7;"></div>
<div style="left:489.25px;top:505.7px;width:67.8px;height:17.7px;background:#00916b;"></div>
<div class="t" style="top:508.84px;font-size:9.7px;line-height:12px;color:#222;left:281.45px;width:64px;text-align:right;font-weight:bold;transform:scaleX(0.948);transform-origin:100% 50%;">30,763,702</div>
<div class="t" style="top:508.84px;font-size:9.7px;line-height:12px;color:#222;left:349.25px;width:64px;text-align:right;font-weight:bold;transform:scaleX(0.948);transform-origin:100% 50%;">42,855,869</div>
<div class="t" style="top:508.84px;font-size:9.7px;line-height:12px;color:#222;left:417.05px;width:64px;text-align:right;font-weight:bold;transform:scaleX(0.948);transform-origin:100% 50%;">12,092,167</div>
<div class="t" style="top:508.84px;font-size:9.7px;line-height:12px;color:#fff;left:484.85px;width:64px;text-align:right;font-weight:bold;transform:scaleX(0.948);transform-origin:100% 50%;">39.3%</div>
<div style="left:570.45px;top:505.7px;width:135.6px;height:17.7px;background:#dce5f7;"></div>
<div style="left:706.05px;top:505.7px;width:67.8px;height:17.7px;background:#dce5f7;"></div>
<div style="left:773.85px;top:505.7px;width:67.8px;height:17.7px;background:#00916b;"></div>
<div class="t" style="top:508.84px;font-size:9.7px;line-height:12px;color:#222;left:566.05px;width:64px;text-align:right;font-weight:bold;transform:scaleX(0.948);transform-origin:100% 50%;">34,178,573</div>
<div class="t" style="top:508.84px;font-size:9.7px;line-height:12px;color:#222;left:633.85px;width:64px;text-align:right;font-weight:bold;transform:scaleX(0.948);transform-origin:100% 50%;">49,223,387</div>
<div class="t" style="top:508.84px;font-size:9.7px;line-height:12px;color:#222;left:701.65px;width:64px;text-align:right;font-weight:bold;transform:scaleX(0.948);transform-origin:100% 50%;">15,044,814</div>
<div class="t" style="top:508.84px;font-size:9.7px;line-height:12px;color:#fff;left:769.45px;width:64px;text-align:right;font-weight:bold;transform:scaleX(0.948);transform-origin:100% 50%;">44.0%</div>
<div style="left:855.05px;top:505.7px;width:135.6px;height:17.7px;background:#dce5f7;"></div>
<div style="left:990.65px;top:505.7px;width:67.8px;height:17.7px;background:#dce5f7;"></div>
<div style="left:1058.45px;top:505.7px;width:67.8px;height:17.7px;background:#00916b;"></div>
<div class="t" style="top:508.84px;font-size:9.7px;line-height:12px;color:#222;left:850.65px;width:64px;text-align:right;font-weight:bold;transform:scaleX(0.948);transform-origin:100% 50%;">37,509,745</div>
<div class="t" style="top:508.84px;font-size:9.7px;line-height:12px;color:#222;left:918.45px;width:64px;text-align:right;font-weight:bold;transform:scaleX(0.948);transform-origin:100% 50%;">55,729,029</div>
<div class="t" style="top:508.84px;font-size:9.7px;line-height:12px;color:#222;left:986.25px;width:64px;text-align:right;font-weight:bold;transform:scaleX(0.948);transform-origin:100% 50%;">18,219,284</div>
<div class="t" style="top:508.84px;font-size:9.7px;line-height:12px;color:#fff;left:1054.05px;width:64px;text-align:right;font-weight:bold;transform:scaleX(0.948);transform-origin:100% 50%;">48.6%</div>
<div style="left:1139.65px;top:505.7px;width:131.15px;height:17.7px;background:#dce5f7;"></div>
<div class="t" style="top:508.84px;font-size:9.7px;line-height:12px;color:#222;left:1135.25px;width:64px;text-align:right;font-weight:bold;transform:scaleX(0.948);transform-origin:100% 50%;">43,003,520</div>
<div class="t" style="top:508.84px;font-size:9.7px;line-height:12px;color:#222;left:1203.05px;width:64px;text-align:right;font-weight:bold;transform:scaleX(0.948);transform-origin:100% 50%;">65,838,765</div>
<div style="left:204.6px;top:558.7px;width:67.5px;height:17.7px;background:#dce5f7;"></div>
<div class="t" style="top:561.84px;font-size:9.7px;line-height:12px;color:#222;left:199.9px;width:64px;text-align:right;transform:scaleX(0.877);transform-origin:100% 50%;">13,627,327</div>
<div style="left:285.85px;top:558.7px;width:135.6px;height:17.7px;background:#dce5f7;"></div>
<div style="left:421.45px;top:558.7px;width:67.8px;height:17.7px;background:#dce5f7;"></div>
<div style="left:489.25px;top:558.7px;width:67.8px;height:17.7px;background:#f7ec9b;"></div>
<div class="t" style="top:561.84px;font-size:9.7px;line-height:12px;color:#222;left:281.45px;width:64px;text-align:right;transform:scaleX(0.877);transform-origin:100% 50%;">6,477,990</div>
<div class="t" style="top:561.84px;font-size:9.7px;line-height:12px;color:#222;left:349.25px;width:64px;text-align:right;transform:scaleX(0.877);transform-origin:100% 50%;">6,409,807</div>
<div class="t" style="top:561.84px;font-size:9.7px;line-height:12px;color:#c4423f;left:417.05px;width:64px;text-align:right;transform:scaleX(0.877);transform-origin:100% 50%;">-68,183</div>
<div class="t" style="top:561.84px;font-size:9.7px;line-height:12px;color:#c4423f;left:484.85px;width:64px;text-align:right;transform:scaleX(0.877);transform-origin:100% 50%;">-1.1%</div>
<div style="left:570.45px;top:558.7px;width:135.6px;height:17.7px;background:#dce5f7;"></div>
<div style="left:706.05px;top:558.7px;width:67.8px;height:17.7px;background:#dce5f7;"></div>
<div style="left:773.85px;top:558.7px;width:67.8px;height:17.7px;background:#92e8b2;"></div>
<div class="t" style="top:561.84px;font-size:9.7px;line-height:12px;color:#222;left:566.05px;width:64px;text-align:right;transform:scaleX(0.877);transform-origin:100% 50%;">16,313,389</div>
<div class="t" style="top:561.84px;font-size:9.7px;line-height:12px;color:#222;left:633.85px;width:64px;text-align:right;transform:scaleX(0.877);transform-origin:100% 50%;">16,673,755</div>
<div class="t" style="top:561.84px;font-size:9.7px;line-height:12px;color:#222;left:701.65px;width:64px;text-align:right;transform:scaleX(0.877);transform-origin:100% 50%;">360,367</div>
<div class="t" style="top:561.84px;font-size:9.7px;line-height:12px;color:#222;left:769.45px;width:64px;text-align:right;transform:scaleX(0.877);transform-origin:100% 50%;">2.2%</div>
<div style="left:855.05px;top:558.7px;width:135.6px;height:17.7px;background:#dce5f7;"></div>
<div style="left:990.65px;top:558.7px;width:67.8px;height:17.7px;background:#dce5f7;"></div>
<div style="left:1058.45px;top:558.7px;width:67.8px;height:17.7px;background:#74bfa3;"></div>
<div class="t" style="top:561.84px;font-size:9.7px;line-height:12px;color:#222;left:850.65px;width:64px;text-align:right;transform:scaleX(0.877);transform-origin:100% 50%;">12,979,905</div>
<div class="t" style="top:561.84px;font-size:9.7px;line-height:12px;color:#222;left:918.45px;width:64px;text-align:right;transform:scaleX(0.877);transform-origin:100% 50%;">13,703,935</div>
<div class="t" style="top:561.84px;font-size:9.7px;line-height:12px;color:#222;left:986.25px;width:64px;text-align:right;transform:scaleX(0.877);transform-origin:100% 50%;">724,030</div>
<div class="t" style="top:561.84px;font-size:9.7px;line-height:12px;color:#222;left:1054.05px;width:64px;text-align:right;transform:scaleX(0.877);transform-origin:100% 50%;">5.6%</div>
<div style="left:1139.65px;top:558.7px;width:131.15px;height:17.7px;background:#dce5f7;"></div>
<div class="t" style="top:561.84px;font-size:9.7px;line-height:12px;color:#222;left:1135.25px;width:64px;text-align:right;transform:scaleX(0.877);transform-origin:100% 50%;">31,334,017</div>
<div class="t" style="top:561.84px;font-size:9.7px;line-height:12px;color:#222;left:1203.05px;width:64px;text-align:right;transform:scaleX(0.877);transform-origin:100% 50%;">34,172,313</div>
<div style="left:204.6px;top:576.4px;width:67.5px;height:17.8px;background:#dce5f7;"></div>
<div class="t" style="top:579.54px;font-size:9.7px;line-height:12px;color:#222;left:199.9px;width:64px;text-align:right;transform:scaleX(0.877);transform-origin:100% 50%;">0</div>
<div style="left:285.85px;top:576.4px;width:135.6px;height:17.8px;background:#dce5f7;"></div>
<div style="left:421.45px;top:576.4px;width:67.8px;height:17.8px;background:#dce5f7;"></div>
<div style="left:489.25px;top:576.4px;width:67.8px;height:17.8px;background:#f7ec9b;"></div>
<div class="t" style="top:579.54px;font-size:9.7px;line-height:12px;color:#c4423f;left:281.45px;width:64px;text-align:right;transform:scaleX(0.877);transform-origin:100% 50%;">-7,637,400</div>
<div class="t" style="top:579.54px;font-size:9.7px;line-height:12px;color:#c4423f;left:349.25px;width:64px;text-align:right;transform:scaleX(0.877);transform-origin:100% 50%;">-7,697,605</div>
<div class="t" style="top:579.54px;font-size:9.7px;line-height:12px;color:#222;left:417.05px;width:64px;text-align:right;transform:scaleX(0.877);transform-origin:100% 50%;">60,205</div>
<div class="t" style="top:579.54px;font-size:9.7px;line-height:12px;color:#c4423f;left:484.85px;width:64px;text-align:right;transform:scaleX(0.877);transform-origin:100% 50%;">-0.8%</div>
<div style="left:570.45px;top:576.4px;width:135.6px;height:17.8px;background:#dce5f7;"></div>
<div style="left:706.05px;top:576.4px;width:67.8px;height:17.8px;background:#dce5f7;"></div>
<div style="left:773.85px;top:576.4px;width:67.8px;height:17.8px;background:#f0f36c;"></div>
<div class="t" style="top:579.54px;font-size:9.7px;line-height:12px;color:#222;left:566.05px;width:64px;text-align:right;transform:scaleX(0.877);transform-origin:100% 50%;">5,233,524</div>
<div class="t" style="top:579.54px;font-size:9.7px;line-height:12px;color:#222;left:633.85px;width:64px;text-align:right;transform:scaleX(0.877);transform-origin:100% 50%;">5,535,697</div>
<div class="t" style="top:579.54px;font-size:9.7px;line-height:12px;color:#c4423f;left:701.65px;width:64px;text-align:right;transform:scaleX(0.877);transform-origin:100% 50%;">-302,173</div>
<div class="t" style="top:579.54px;font-size:9.7px;line-height:12px;color:#c4423f;left:769.45px;width:64px;text-align:right;transform:scaleX(0.877);transform-origin:100% 50%;">-5.8%</div>
<div style="left:855.05px;top:576.4px;width:135.6px;height:17.8px;background:#dce5f7;"></div>
<div style="left:990.65px;top:576.4px;width:67.8px;height:17.8px;background:#dce5f7;"></div>
<div style="left:1058.45px;top:576.4px;width:67.8px;height:17.8px;background:#74bfa3;"></div>
<div class="t" style="top:579.54px;font-size:9.7px;line-height:12px;color:#c4423f;left:850.65px;width:64px;text-align:right;transform:scaleX(0.877);transform-origin:100% 50%;">-3,293,040</div>
<div class="t" style="top:579.54px;font-size:9.7px;line-height:12px;color:#c4423f;left:918.45px;width:64px;text-align:right;transform:scaleX(0.877);transform-origin:100% 50%;">-3,107,695</div>
<div class="t" style="top:579.54px;font-size:9.7px;line-height:12px;color:#c4423f;left:986.25px;width:64px;text-align:right;transform:scaleX(0.877);transform-origin:100% 50%;">-185,345</div>
<div class="t" style="top:579.54px;font-size:9.7px;line-height:12px;color:#222;left:1054.05px;width:64px;text-align:right;transform:scaleX(0.877);transform-origin:100% 50%;">5.6%</div>
<div style="left:1139.65px;top:576.4px;width:131.15px;height:17.8px;background:#dce5f7;"></div>
<div class="t" style="top:579.54px;font-size:9.7px;line-height:12px;color:#222;left:1135.25px;width:64px;text-align:right;transform:scaleX(0.877);transform-origin:100% 50%;">6,415,981</div>
<div class="t" style="top:579.54px;font-size:9.7px;line-height:12px;color:#222;left:1203.05px;width:64px;text-align:right;transform:scaleX(0.877);transform-origin:100% 50%;">7,263,749</div>
<div style="left:204.6px;top:594.2px;width:67.5px;height:17.8px;background:#dce5f7;"></div>
<div class="t" style="top:597.34px;font-size:9.7px;line-height:12px;color:#222;left:199.9px;width:64px;text-align:right;transform:scaleX(0.877);transform-origin:100% 50%;">13,357,479</div>
<div style="left:285.85px;top:594.2px;width:135.6px;height:17.8px;background:#dce5f7;"></div>
<div style="left:421.45px;top:594.2px;width:67.8px;height:17.8px;background:#f4f4f4;"></div>
<div style="left:489.25px;top:594.2px;width:67.8px;height:17.8px;background:#f7ec9b;"></div>
<div class="t" style="top:597.34px;font-size:9.7px;line-height:12px;color:#222;left:281.45px;width:64px;text-align:right;transform:scaleX(0.877);transform-origin:100% 50%;">5,720,079</div>
<div class="t" style="top:597.34px;font-size:9.7px;line-height:12px;color:#222;left:349.25px;width:64px;text-align:right;transform:scaleX(0.877);transform-origin:100% 50%;">5,659,874</div>
<div class="t" style="top:597.34px;font-size:9.7px;line-height:12px;color:#c4423f;left:417.05px;width:64px;text-align:right;transform:scaleX(0.877);transform-origin:100% 50%;">-60,205</div>
<div class="t" style="top:597.34px;font-size:9.7px;line-height:12px;color:#c4423f;left:484.85px;width:64px;text-align:right;transform:scaleX(0.877);transform-origin:100% 50%;">-1.1%</div>
<div style="left:570.45px;top:594.2px;width:135.6px;height:17.8px;background:#dce5f7;"></div>
<div style="left:706.05px;top:594.2px;width:67.8px;height:17.8px;background:#f4f4f4;"></div>
<div style="left:773.85px;top:594.2px;width:67.8px;height:17.8px;background:#92e8b2;"></div>
<div class="t" style="top:597.34px;font-size:9.7px;line-height:12px;color:#222;left:566.05px;width:64px;text-align:right;transform:scaleX(0.877);transform-origin:100% 50%;">10,953,603</div>
<div class="t" style="top:597.34px;font-size:9.7px;line-height:12px;color:#222;left:633.85px;width:64px;text-align:right;transform:scaleX(0.877);transform-origin:100% 50%;">11,195,570</div>
<div class="t" style="top:597.34px;font-size:9.7px;line-height:12px;color:#222;left:701.65px;width:64px;text-align:right;transform:scaleX(0.877);transform-origin:100% 50%;">241,968</div>
<div class="t" style="top:597.34px;font-size:9.7px;line-height:12px;color:#222;left:769.45px;width:64px;text-align:right;transform:scaleX(0.877);transform-origin:100% 50%;">2.2%</div>
<div style="left:855.05px;top:594.2px;width:135.6px;height:17.8px;background:#dce5f7;"></div>
<div style="left:990.65px;top:594.2px;width:67.8px;height:17.8px;background:#f4f4f4;"></div>
<div style="left:1058.45px;top:594.2px;width:67.8px;height:17.8px;background:#74bfa3;"></div>
<div class="t" style="top:597.34px;font-size:9.7px;line-height:12px;color:#222;left:850.65px;width:64px;text-align:right;transform:scaleX(0.877);transform-origin:100% 50%;">7,660,563</div>
<div class="t" style="top:597.34px;font-size:9.7px;line-height:12px;color:#222;left:918.45px;width:64px;text-align:right;transform:scaleX(0.877);transform-origin:100% 50%;">8,087,875</div>
<div class="t" style="top:597.34px;font-size:9.7px;line-height:12px;color:#222;left:986.25px;width:64px;text-align:right;transform:scaleX(0.877);transform-origin:100% 50%;">427,313</div>
<div class="t" style="top:597.34px;font-size:9.7px;line-height:12px;color:#222;left:1054.05px;width:64px;text-align:right;transform:scaleX(0.877);transform-origin:100% 50%;">5.6%</div>
<div style="left:1139.65px;top:594.2px;width:131.15px;height:17.8px;background:#dce5f7;"></div>
<div class="t" style="top:597.34px;font-size:9.7px;line-height:12px;color:#222;left:1135.25px;width:64px;text-align:right;transform:scaleX(0.877);transform-origin:100% 50%;">14,076,543</div>
<div class="t" style="top:597.34px;font-size:9.7px;line-height:12px;color:#222;left:1203.05px;width:64px;text-align:right;transform:scaleX(0.877);transform-origin:100% 50%;">15,351,624</div>
<div style="left:1279px;top:283px;width:2px;height:351px;background:#d6ddef;"></div>
<div style="left:1274px;top:291px;width:2px;height:174px;background:#bccbe8;"></div>
<svg class="a" style="left:1272.5px;top:285px" width="5" height="4" viewBox="0 0 5 4"><path d="M0.3 3.6h4.4L2.5 0.4z" fill="#111"/></svg>
<svg class="a" style="left:1272.5px;top:625px" width="5" height="4" viewBox="0 0 5 4"><path d="M0.3 0.4h4.4L2.5 3.6z" fill="#111"/></svg>
<div style="left:3px;top:633px;width:1278px;height:1px;background:#c6d4f0;"></div><svg class="a" style="left:665px;top:219px;z-index:50" width="24" height="32" viewBox="665 219 24 32">
<g fill="#fff" stroke="#fff" stroke-width="1.6" stroke-linejoin="round">
<rect x="668" y="229" width="5.2" height="1"/><path d="M667 229.5l3-2.6v5.2z"/>
<rect x="678" y="229" width="5" height="1"/><path d="M684 229.5l-3-2.6v5.2z"/>
<rect x="674.8" y="222" width="1" height="5.4"/><path d="M675.3 221l-2.6 3h5.2z"/>
<path d="M673.2 235h2v1.6h-0.8z"/>
</g>
<g fill="#000">
<rect x="668" y="229" width="5.2" height="1"/><path d="M667 229.5l3-2.6v5.2z"/>
<rect x="678" y="229" width="5" height="1"/><path d="M684 229.5l-3-2.6v5.2z"/>
<rect x="674.8" y="222" width="1" height="5.4"/><path d="M675.3 221l-2.6 3h5.2z"/>
<path d="M673.2 235h2v1.6h-0.8z"/>
</g>
<path d="M675.3 229.6v14.2l3.2-3.1l2.9 6.8l2.5-1l-2.9-6.7h4.9z" fill="#fff" stroke="#000" stroke-width="1" stroke-linejoin="miter"/>
</svg>

</body></html>
